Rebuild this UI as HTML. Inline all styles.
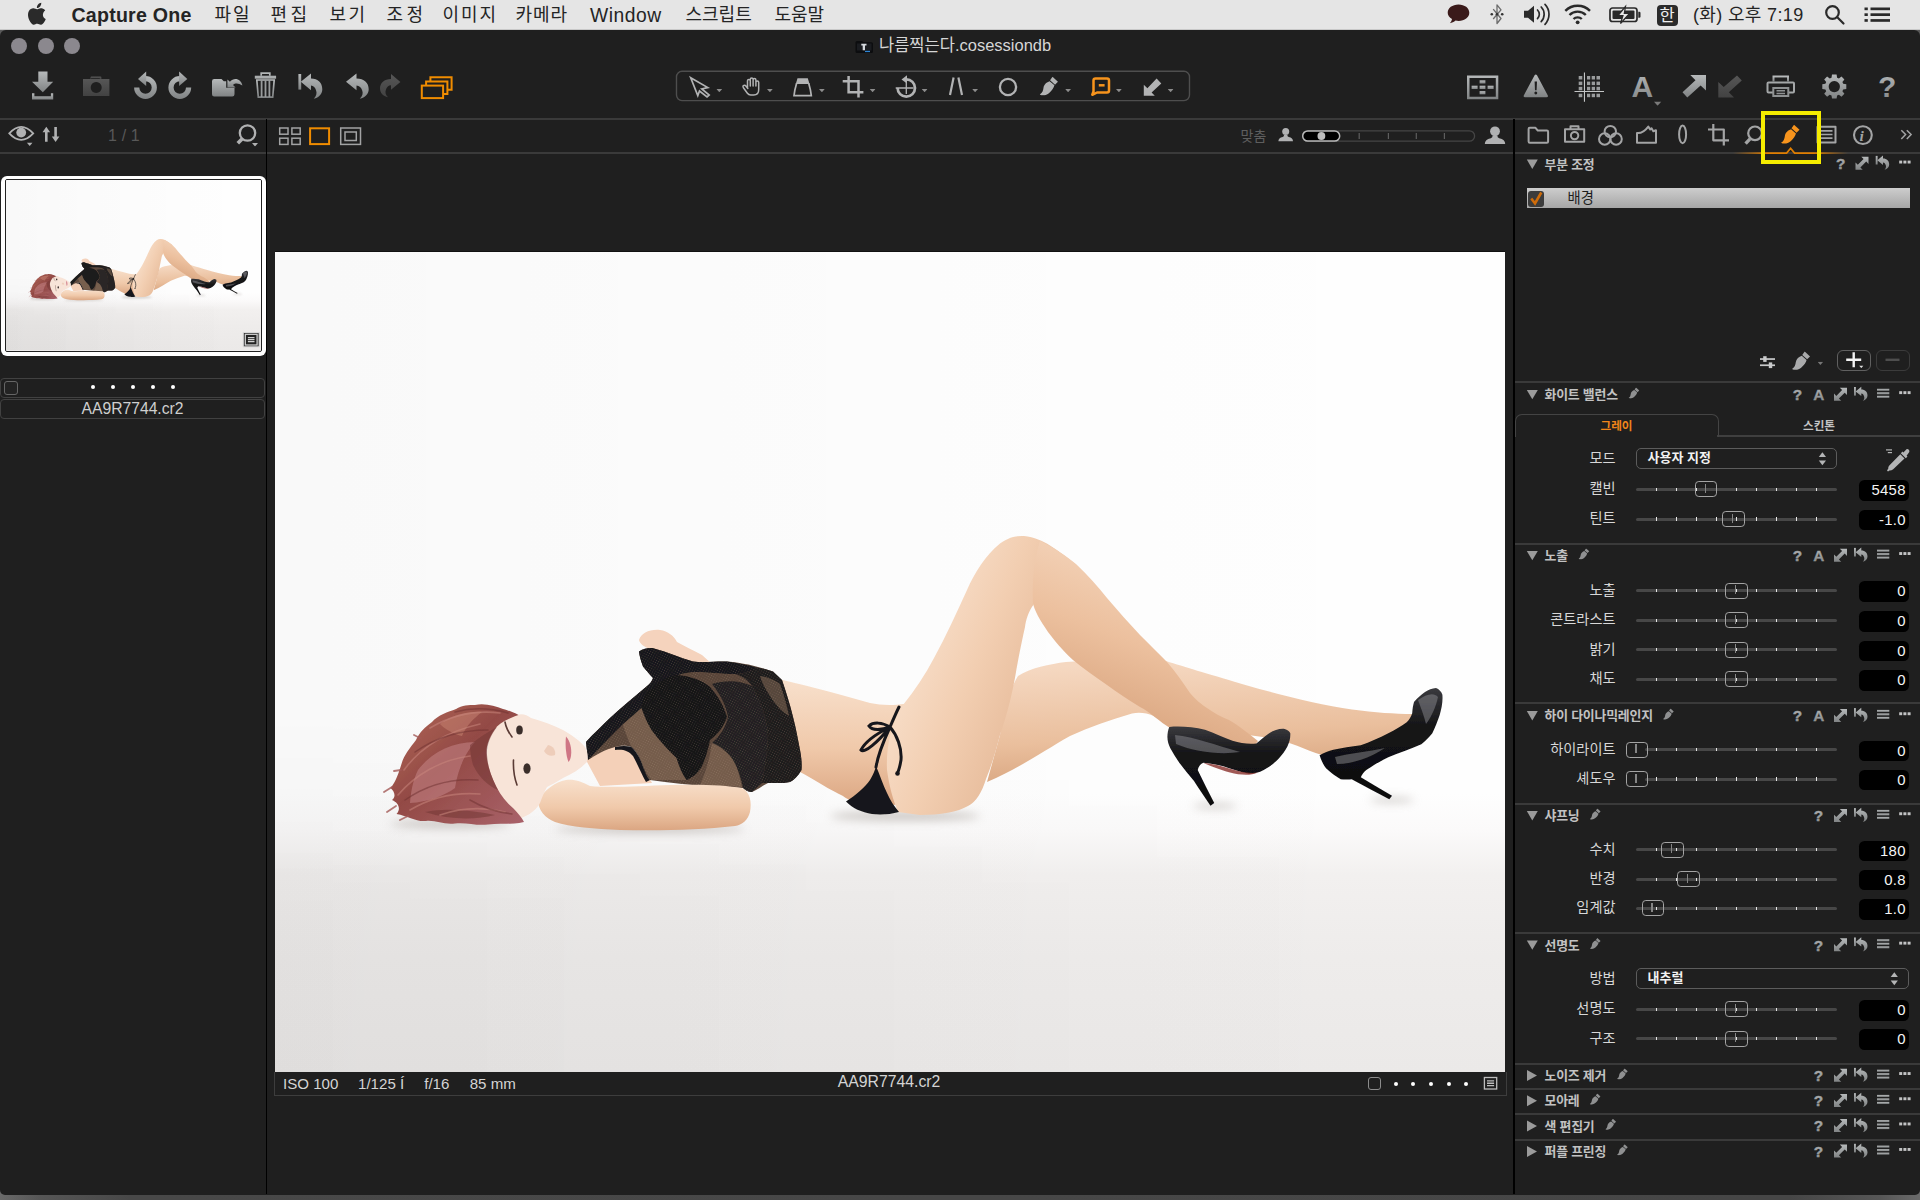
<!DOCTYPE html>
<html lang="ko">
<head>
<meta charset="utf-8">
<title>Capture One</title>
<style>
*{box-sizing:border-box;margin:0;padding:0}
html,body{width:1920px;height:1200px;overflow:hidden}
body{position:relative;background:#5a5a5a;font-family:"Liberation Sans","Noto Sans CJK KR",sans-serif;color:#c8c8c8;font-size:14px}
body>div,body>svg{position:absolute}
svg{overflow:visible}
#menubar{left:0;top:0;width:1920px;height:30px;background:#e5e5e5;border-bottom:1px solid #c8c8c8}
#menubar span{position:absolute;top:1px;height:29px;line-height:29px;color:#242424;white-space:nowrap}
#menubar span.b{font-weight:bold;font-size:19.6px}
#menubar span.k{font-size:18px}
#menubar span.l{font-size:19.3px}
#menubar span.han{left:1656.5px;top:4.5px;width:21px;height:21px;line-height:20px;background:#2b2b2b;color:#f0f0f0;border-radius:4px;font-size:16.5px;text-align:center}
#win{left:0;top:30px;width:1920px;height:1164.5px;background:#1f1f1f;border-radius:6px 6px 5px 5px}
#desk{left:0;top:1186px;width:1920px;height:14px;background:linear-gradient(90deg,#6a6a6a 0,#565656 40px,#484848 130px,#464646 1790px,#565656 1880px,#6a6a6a 1920px)}
.hl{height:2px;background:#3a3a3a}
.vl{width:2px;background:#000}
.tl{top:37.5px;width:16px;height:16px;border-radius:50%;background:#8b888e}
#title{top:33px;left:879px;font-size:16.5px;color:#d6d6d6;line-height:24px;white-space:nowrap}
.t{white-space:nowrap;line-height:21px}
#thumb{left:1px;top:175.5px;width:264.5px;height:180px;background:#fff;border-radius:6px}
#thumbin{position:absolute;left:3.5px;top:3.5px;width:257px;height:172.5px;border:1.3px solid #222;border-radius:2px;overflow:hidden;background:#f3f3f3}
.rbar{border:1.3px solid #414141;border-radius:4px}
.cb{width:14px;height:14px;border:1px solid #666;border-radius:3px;background:#232323}
.dot{width:4px;height:4px;border-radius:50%;background:#fff}
#photobox{left:275px;top:252px;width:1230px;height:820px;background:#f6f6f6;overflow:hidden;box-shadow:0 -1px 0 #111}
#infobar{left:273.8px;top:1072px;width:1233.4px;height:24.2px;border:1.8px solid #3d3d3d;border-top:none}
.inf{top:1073.5px;font-size:15.1px;color:#d4d4d4;line-height:20px}
.sh{font-size:12.9px;font-weight:bold;color:#c2c2c2;letter-spacing:-.2px}
.lb{left:1515px;width:100.5px;text-align:right;font-size:14.2px;color:#d8d8d8}
#layer{left:1526.5px;top:187.5px;width:383px;height:20.5px;background:linear-gradient(#cdcdcd,#a6a6a6)}
#lcb{left:1528px;top:191px;width:16px;height:15.5px;border-radius:3px;background:#3c3c3c}
.btn{border:1.5px solid #555;border-radius:6px}
#tabline{left:1717px;top:435px;width:203px;height:2px;background:#3f3f3f}
#tab1{left:1515px;top:414px;width:204px;height:23px;border:1.5px solid #444;border-bottom:none;border-radius:7px 7px 0 0}
.sel{height:20.6px;border:1.3px solid #5c5c5c;border-radius:5px}
.sel span{position:absolute;left:10.5px;top:-1px;font-size:13px;font-weight:bold;color:#f2f2f2;line-height:20px;white-space:nowrap}
.trk{height:3px;background:#474747;border-radius:1.5px}
.tk{width:1.6px;height:3.2px;background:#e8e8e8}
.th{width:22.4px;height:16.2px;border:1.8px solid #a4a4a4;border-radius:3.8px}
.th:after{content:"";position:absolute;left:8.8px;top:1.8px;width:1.3px;height:9px;background:#858585}
.val{left:1858.7px;width:50.4px;height:20.8px;background:#000;border-radius:5.5px;color:#f4f4f4;font-size:14.9px;letter-spacing:.25px;line-height:20.4px;text-align:right;padding-right:3.4px;white-space:nowrap}
#ybox{left:1760.5px;top:110.7px;width:60.4px;height:53.4px;border:4.7px solid #f5ec00;z-index:9}

</style>
</head>
<body>
<div id="desk"></div>
<div id="win"></div>
<div id="menubar">
<span class="b" style="left:71.5px;letter-spacing:0.22px">Capture One</span>
<span class="k" style="left:214.5px;letter-spacing:2px">파일</span>
<span class="k" style="left:270.5px;letter-spacing:3.5px">편집</span>
<span class="k" style="left:329.5px;letter-spacing:2.5px">보기</span>
<span class="k" style="left:386.5px;letter-spacing:3.5px">조정</span>
<span class="k" style="left:442.5px;letter-spacing:2px">이미지</span>
<span class="k" style="left:515.5px;letter-spacing:1px">카메라</span>
<span class="l" style="left:590px;letter-spacing:0.5px">Window</span>
<span class="k" style="left:685.5px;letter-spacing:0px">스크립트</span>
<span class="k" style="left:774.5px;letter-spacing:0px">도움말</span>
<span class="k" style="left:1693px;letter-spacing:.35px">(화) 오후 7:19</span>
<span class="han">한</span>
</div>
<div class="tl" style="left:11px"></div>
<div class="tl" style="left:37.5px"></div>
<div class="tl" style="left:64px"></div>
<div id="title">나름찍는다.cosessiondb</div>
<div class="hl" style="left:0;top:117.5px;width:1920px"></div>
<div class="hl" style="left:0;top:151.5px;width:1920px"></div>
<div class="vl" style="left:265.6px;top:119px;height:1075px;width:1.6px"></div>
<div class="vl" style="left:1513px;top:119px;height:1075px"></div>
<div class="t" style="left:108px;top:125px;font-size:16px;color:#585858;letter-spacing:.15px">1 / 1</div>
<div class="t" style="left:1240.5px;top:125.5px;font-size:14px;color:#5e5e5e">맞춤</div>
<div id="thumb"><div id="thumbin"><svg id="photo_t" width="100%" height="100%" viewBox="275 252 1230 820" preserveAspectRatio="none" style="position:absolute;left:0;top:0">
<defs>
<linearGradient id="tbg" x1="0" y1="0" x2="0" y2="1"><stop offset="0" stop-color="#fefefe"/><stop offset=".66" stop-color="#fefefe"/><stop offset=".705" stop-color="#fbfafa"/><stop offset=".76" stop-color="#f2f0ef"/><stop offset=".86" stop-color="#eeeceb"/><stop offset="1" stop-color="#ebe9e8"/></linearGradient>
<linearGradient id="tvg" x1="0" y1="0" x2="1" y2="0"><stop offset="0" stop-color="#000" stop-opacity=".052"/><stop offset=".35" stop-color="#000" stop-opacity=".03"/><stop offset=".75" stop-color="#000" stop-opacity=".008"/><stop offset="1" stop-color="#000" stop-opacity="0"/></linearGradient>
<linearGradient id="ta" x1="0" y1="0" x2="0" y2="1"><stop offset="0" stop-color="#f8e0cc"/><stop offset=".55" stop-color="#f0c9aa"/><stop offset="1" stop-color="#dba682"/></linearGradient>
<linearGradient id="tb" x1="0" y1=".2" x2="1" y2=".8"><stop offset="0" stop-color="#fbe8d8"/><stop offset=".45" stop-color="#f2ceb1"/><stop offset="1" stop-color="#dcaa86"/></linearGradient>
<linearGradient id="tc" x1=".7" y1="0" x2=".3" y2="1"><stop offset="0" stop-color="#f7dcc6"/><stop offset=".5" stop-color="#ecc09e"/><stop offset="1" stop-color="#d39c75"/></linearGradient>
<linearGradient id="td" x1=".4" y1="0" x2=".6" y2="1"><stop offset="0" stop-color="#f5d8c1"/><stop offset=".6" stop-color="#eabf9d"/><stop offset="1" stop-color="#d6a27c"/></linearGradient>
<linearGradient id="th" x1="0" y1="0" x2="1" y2="1"><stop offset="0" stop-color="#b46a5a"/><stop offset=".45" stop-color="#934a45"/><stop offset="1" stop-color="#a9626a"/></linearGradient>
<linearGradient id="ts" x1="0" y1="0" x2="0" y2="1"><stop offset="0" stop-color="#3a3a3e"/><stop offset=".35" stop-color="#141416"/><stop offset="1" stop-color="#0c0c0e"/></linearGradient>
<linearGradient id="tmg" x1="0" y1="0" x2="0" y2="1"><stop offset=".55" stop-color="#000"/><stop offset=".8" stop-color="#fff"/></linearGradient><mask id="tmk" maskUnits="userSpaceOnUse" x="275" y="252" width="1230" height="820"><rect x="275" y="252" width="1230" height="820" fill="url(#tmg)"/></mask><pattern id="tmesh" width="2.400" height="2.400" patternUnits="userSpaceOnUse" patternTransform="rotate(30)"><rect width="2.400" height="2.400" fill="#000" fill-opacity=".0"/><circle cx="1.200" cy="1.200" r=".5" fill="#c9a78e" fill-opacity=".3"/></pattern><filter id="tbl" x="-20%" y="-100%" width="140%" height="300%"><feGaussianBlur stdDeviation="5"/></filter>
<filter id="tb2" x="-10%" y="-10%" width="120%" height="120%"><feGaussianBlur stdDeviation=".7"/></filter>
</defs>
<rect x="275" y="252" width="1230" height="820" fill="url(#tbg)"/>
<rect x="275" y="252" width="1230" height="820" fill="url(#tvg)" opacity=".4"/><rect x="275" y="252" width="1230" height="820" fill="url(#tvg)" opacity=".55" mask="url(#tmk)"/>
<!-- floor shadows -->
<g filter="url(#tbl)" fill="#a9a29c" opacity=".6"><ellipse cx="650" cy="829" rx="95" ry="4"/><ellipse cx="905" cy="816" rx="75" ry="4.500"/><ellipse cx="450" cy="824" rx="60" ry="4"/><ellipse cx="1215" cy="806" rx="22" ry="2.500"/><ellipse cx="1392" cy="800" rx="22" ry="2.500"/></g>
<g filter="url(#tb2)">
<!-- back leg: second thigh + calf -->
<path fill="url(#td)" d="M1000 735 C1005 705 1012 685 1018 676 C1030 668 1050 664 1066 662 C1095 660 1130 662 1166 661 C1185 667 1205 673 1242 684 C1280 695 1320 705 1352 709.500 C1375 712.500 1395 714 1412 714 L1420 742 C1400 748 1370 752 1345 752 L1322 755 C1305 750 1290 741 1270 738 L1168 724 C1155 716 1146 711 1132 713.500 C1110 720 1090 727 1070 736 C1045 750 1020 768 987 782 Z"/>
<!-- torso -->
<path fill="url(#ta)" d="M779 679 C795 683 805 685.500 815 688 C835 693 852 698 870 703 C885 706 900 706 925 700 L930 800 C905 806 880 806 862 803 C852 801 846 799 843 796 C830 790 815 780 800 772 Z"/>
<!-- front thigh -->
<path fill="url(#tb)" d="M903 705 C915 690 925 675 934 658 C946 636 957 612 967 590 C975 572 985 556 1000 543.500 C1008 537.500 1016 535.500 1024 536 C1034 537 1043 541 1050 545.500 C1060 552 1068 558 1075 564 L1082 585 C1065 590 1045 596 1034 604 C1028 612 1026 620 1025 627 C1021 645 1018 660 1016 672 C1013 690 1008 712 1000 735 C996 750 992 765 986 779 C982 792 976 802 968 806 C958 812 940 815 920 815 L898 812 C893 800 889 785 887 770 C886 750 890 725 903 705 Z"/>
<!-- front shin + foot -->
<path fill="url(#tc)" d="M1040 541 C1055 548 1066 556 1076 564 C1088 575 1098 587 1107 598 C1118 611 1129 623 1140 635 C1150 645 1159 654 1167 662 C1176 672 1183 683 1190 693 C1196 700 1201 704 1207 708 C1214 713 1221 717 1229 720 C1238 725 1248 733 1258 741 L1250 752 C1225 750 1195 742 1170 728 C1160 722 1150 712 1140 707 C1128 700 1117 692 1107 685 C1095 677 1083 668 1073 660 C1062 650 1054 640 1048 632 C1040 620 1034 610 1033 603 C1032 580 1034 560 1040 541 Z"/>
<!-- bikini -->
<path fill="#17171a" d="M846 801.500 C856 795 865 787 870 780 C873 775 875 770 876 766 C880 775 883 785 887 793 C890 800 894 806 899 812 C890 814.500 880 815 872 814 C862 812.500 852 808 846 801.500 Z"/>
<g fill="none" stroke="#17171a" stroke-width="3" stroke-linecap="round"><path d="M899 707 C896 713 893 720 890 727 M890 727 C882 722 873 722 869 726 C872 731 882 730 890 727 M890 727 C878 733 865 742 861 750 C864 754 878 742 890 727 M890 727 C897 735 902 748 901 760 C900 766 899 770 897.500 773 M890 727 C884 740 878 755 876 767"/></g><circle cx="897.500" cy="773.500" r="2.300" fill="#17171a"/>
<!-- raised hand -->
<path fill="#f5d3bd" d="M639 640 C641 633 650 629 660 630 C668 631 674 636 677 642 C684 646 693 650 702 655 L712 664 L690 663 C675 659 660 652 650 649 C644 647 640 644 639 640 Z"/>
<!-- chest skin -->
<path fill="#f4d0b8" d="M586 760 C596 750 608 745 620 746 C630 747 638 752 643 766 L652 783 L600 786 Z"/>
<!-- mesh top -->
<path fill="#594539" d="M639 651.500 C645 648 650 647.500 654 648.500 C668 652 680 658 693 661.500 C705 663 716 661 727 661.500 C745 663 760 667 773 671.500 L782 680 C786 692 790 704 793 717 C796 728 798 740 800 750 C801.500 758 802 764 801.500 770 C798 776 794 780 790 782 C783 783.500 776 783 768 783 C762 786 757 790 752 792 C748 792 745 790 743 788 C732 787.500 720 787 710 786.500 C690 785 670 783 650 780 C646 776 644 771 643 766.500 C640 758 636 751 631.500 747 C626 745 620 745.500 615 747 C604 750 596 755 588 760 L586 742 C594 733 602 726 610 718 C622 707 635 696 646.500 686.500 C650 684 652 681 653 678 C649 674 646 670 643 666.500 C641 661 639.500 656 639 651.500 Z"/>
<path fill="#7b6250" opacity=".8" d="M622 722 C630 715 638 708 644 703 C645 712 648 722 652 730 C660 741 669 750 677 758 C680 766 683 774 687 780 L652 780 C647 775 645 770 643 766 C640 758 636 750 631 746 C628 740 625 731 622 722 Z M712 742 C722 745 730 752 735 762 C738 770 740 778 742 787 L700 785 C706 772 710 757 712 742 Z"/>
<path fill="#17171a" d="M639 651.500 C645 648 650 647.500 654 648.500 C668 652 680 658 693 661.500 C705 663 716 661 727 661.500 C738 663 748 665 757 667.500 C750 672 742 674 735 674 C722 674 708 672 697 672 C688 672 680 674 676 676 C668 680 660 686 654 692 C650 696 647 700 645 703 L641.500 708 C637 712 630 718 622 725 L612 735 L588 760 L586 742 C594 733 602 726 610 718 C622 707 635 696 646.500 686.500 C650 684 652 681 653 678 C649 674 646 670 643 666.500 C641 661 639.500 656 639 651.500 Z"/>
<path fill="#141416" d="M647 693 C655 684 666 677 677 675 C690 676 702 680 710 687 C718 696 724 706 727 717 C724 726 718 734 710 740 C708 750 705 760 701.500 767 C697 774 692 778 686.500 780 C682 774 679 766 676.500 758 C668 750 659 740 651.500 730 C647 723 644 715 641.500 708 C642 702 644 697 647 693 Z"/>
<path fill="#1a1a1c" opacity=".88" d="M712 684 C725 680 740 680 752 686 C760 700 766 716 768 733 C768 750 765 767 762 783 L752 792 C748 792 745 790 743 788 C741 778 738 768 733 760 C728 752 720 746 712 743 C720 736 726 727 728 717 C726 705 720 694 712 684 Z"/>
<path fill="#17171a" d="M757 667.500 C763 668.500 768 670 773 671.500 L782 680 C786 692 790 704 793 717 C796 728 798 740 800 750 C801.500 758 802 764 801.500 770 C798 776 794 780 790 782 C783 783.500 776 783 768 783 L762 783 C765 767 768 750 768 733 C766 716 760 700 752 686 C748 680 742 676 735 674 C742 674 750 672 757 667.500 Z" opacity=".9"/>
<path fill="#6a5446" opacity=".75" d="M760 676 C768 677 775 680 780 684 C784 695 787 706 789 716 C782 712 775 704 770 696 C766 690 762 683 760 676 Z"/>
<path fill="#17171a" d="M615 747 C621 745.500 627 745.500 631.500 747 C637 752 641 760 643 766.500 C645 772 647 777 650 780 L646 782 C642 775 638 765 633 756 C628 750 622 749 615 750 Z"/>
<path fill="url(#tmesh)" d="M639 651.500 C645 648 650 647.500 654 648.500 C668 652 680 658 693 661.500 C705 663 716 661 727 661.500 C745 663 760 667 773 671.500 L782 680 C786 692 790 704 793 717 C796 728 798 740 800 750 C801.500 758 802 764 801.500 770 C798 776 794 780 790 782 C783 783.500 776 783 768 783 C762 786 757 790 752 792 C748 792 745 790 743 788 C732 787.500 720 787 710 786.500 C690 785 670 783 650 780 C646 776 644 771 643 766.500 C640 758 636 751 631.500 747 C626 745 620 745.500 615 747 C604 750 596 755 588 760 L586 742 C594 733 602 726 610 718 C622 707 635 696 646.500 686.500 C650 684 652 681 653 678 C649 674 646 670 643 666.500 C641 661 639.500 656 639 651.500 Z"/>
<!-- arm on floor + hand -->
<path fill="url(#ta)" d="M538 800 C545 790 555 782 566 780 C575 779 582 782 590 786 C610 788 640 786 670 785 C700 784 725 785 742 788 C750 792 752 802 750 812 C748 820 742 825 735 826 C700 830 660 831 620 830 C595 829 570 827 555 822 C545 818 538 810 538 800 Z"/>
<!-- face -->
<path fill="#f8e4d8" d="M517 715 C522 713 527 715 531 718 C542 721 553 725 563 730 C572 735 580 741 585 747 C588 752 588 757 587 762 C580 769 572 774 563 778 C557 782 551 785 547 787 C544 792 542 798 540 803 C535 812 525 818 514 820 L500 800 C492 780 486 765 487 752 C488 740 492 730 497 726 C503 721 510 717 517 715 Z"/>
<path fill="#e9c3ae" d="M548 745 C553 746 556 750 555 755 C551 757 546 755 544 751 Z" opacity=".7"/>
<g fill="#3a2e2c"><ellipse cx="519.500" cy="730" rx="3.300" ry="4.600"/><ellipse cx="527" cy="768.500" rx="3.600" ry="5.200"/></g>
<g fill="none" stroke="#5a3a34" stroke-width="1.600" stroke-linecap="round"><path d="M505 722 C506 728 509 733 512 737 M513.500 760 C513 770 514.500 778 517 785"/></g>
<path fill="#cf7685" d="M566 736.500 C570 741 572 748 571 756 C570.500 759 569.500 761 568.500 762 C566 756 565 745 566 736.500 Z"/>
<!-- hair -->
<path fill="url(#th)" d="M475 705 C485 703 495 706 503 709 C510 711 515 713 518.500 715 C510 718 503 721 497 726.500 C490 735 486 745 486.500 753.500 C487 765 491 776 496.500 787 C501 796 507 803 513.500 808.500 C518 813 522 818 524 822 C512 825 500 823 488 824.500 C476 826 466 822 455 823.500 C444 825 436 820 426 821 C416 822 408 816 396.500 814 C401 809 399 803 392 800 C396 797 395 792 390.500 788 C396 782 399 772 401.700 763.300 C404 755 410 748 416 740 C419 733 425 727 432 722 C438 715 448 712 456 709 C462 705 469 705 475 705 Z"/>
<path fill="#c98a8e" opacity=".5" d="M418 770 C432 752 452 742 475 742 C466 752 458 768 455 788 C444 796 428 802 410 803 C411 791 413 780 418 770 Z"/>
<path fill="#c4826f" opacity=".55" d="M440 724 C452 715 468 711 482 712 C474 718 466 726 462 736 C454 734 446 730 440 724 Z"/>
<path fill="#733634" opacity=".55" d="M470 745 C478 738 488 732 497 727 C490 736 486.500 746 487 755 C488 768 492 779 498 790 C488 786 478 776 473 765 C471 758 470 751 470 745 Z M425 812 C445 808 470 810 495 815 C475 820 450 820 425 812 Z"/>
<g fill="none" stroke-linecap="round"><path d="M404 770 C420 748 445 732 480 724 M398 795 C415 775 440 760 470 756 M410 810 C430 798 455 792 480 794 M430 728 C450 716 475 710 500 713 M440 815 C460 808 480 806 505 812" stroke="#c9857c" stroke-width="1.600" opacity=".55"/><path d="M415 752 C435 738 460 730 488 730 M405 800 C425 786 450 778 478 780 M455 712 C470 708 490 708 508 713 M470 800 C480 806 495 812 512 814" stroke="#6e302f" stroke-width="1.500" opacity=".5"/><path d="M392 787 L384 792 M396 806 L387 812 M401 770 L394 771 M420 738 L414 735 M408 816 L400 820" stroke="#a45a58" stroke-width="1.800" opacity=".8"/></g>
<!-- shoes -->
<path fill="url(#ts)" d="M1169.300 727 C1180 726 1193 727 1205 729.700 C1215 733 1224 738 1232.500 740.700 C1241 743.500 1249 744 1256.300 743.400 C1261 740 1265 736 1269.200 733.300 C1274 730 1279 728.500 1283.800 728.750 C1287 729.500 1289.500 731 1290.300 733.300 C1290.500 738 1289.500 742 1287.500 746.200 C1285 751 1282 755 1278.300 759 C1274 763.500 1269 767 1263.700 770 C1259 772.500 1254 773.700 1249 773.700 C1240 772 1231 769 1223.300 766.300 C1216 764.500 1209 763 1203.200 762.700 C1200 764 1198.500 767 1197.700 770 C1203 781 1208.500 792 1214.200 803 L1210.500 805.750 C1204.500 797 1199 789 1194 781 C1189 775 1184 769 1179.300 762.700 C1176 758 1173 753 1170.200 748 C1168.500 744.500 1167.500 741 1167.400 737 C1167.500 733 1168 730 1169.300 727 Z"/>
<path fill="url(#ts)" d="M1319.600 755.300 C1324 753 1328.500 751 1333.300 749.800 C1342 748 1351 746.500 1360.800 745.250 C1370 742 1379 738 1388.300 733.300 C1395 730 1401 726.500 1406.700 722.300 C1409.500 719.500 1411 716.500 1412.200 713.200 C1412.500 709 1413 705.500 1414 702 C1417 698 1421 695 1425 692 C1428.500 689.500 1432 688.500 1436 687.900 C1439 689 1441.500 691.500 1442.400 694.800 C1443 702 1441.500 708.500 1439.700 715 C1437.500 721.500 1435 727.500 1432.300 733.300 C1429 737.500 1425.500 741 1421.300 744.300 C1410 749 1399 753 1388.300 757.200 C1380.500 761 1373 765.500 1366.300 770 C1364 772 1362 774.500 1360.800 777.300 C1371 783.500 1381.500 789.500 1392 795.700 L1389.300 799.300 C1376.500 792.500 1364 786 1351.700 779.200 C1348 779.500 1344.500 779.500 1340.700 779.200 C1335.500 776 1330.500 772.500 1326 768.200 C1323 764 1321 760 1319.600 755.300 Z"/>
<path fill="#8a8a90" opacity=".5" d="M1175 735 C1195 737 1215 745 1240 752 C1220 755 1195 752 1176 744 Z M1418 700 C1426 694 1434 692 1438 697 C1436 706 1432 716 1426 724 C1424 716 1421 708 1418 700 Z M1335 757 C1350 753 1368 752 1385 748 C1370 758 1352 764 1337 764 Z"/>
<path fill="#8a2f2c" opacity=".8" d="M1203.200 762.700 C1212 763.500 1222 766 1231 769 C1240 772 1249 773.700 1258 772.500 C1250 776 1240 775 1230 772.500 C1220 769.500 1210 766 1203.200 762.700 Z"/>
</g>
</svg>
</div></div>
<div class="rbar" style="left:0;top:377.5px;width:265px;height:20.5px"></div>
<div class="rbar" style="left:0;top:398.5px;width:265px;height:20px"></div>
<div class="cb" style="left:4px;top:381px"></div>
<div class="dot" style="left:90.5px;top:385px"></div>
<div class="dot" style="left:110.7px;top:385px"></div>
<div class="dot" style="left:130.8px;top:385px"></div>
<div class="dot" style="left:150.8px;top:385px"></div>
<div class="dot" style="left:170.8px;top:385px"></div>
<div class="t" style="left:0;top:399px;width:265px;text-align:center;font-size:15.7px;color:#cfcfcf;line-height:19px">AA9R7744.cr2</div>
<div id="photobox"><svg id="photo" width="100%" height="100%" viewBox="275 252 1230 820" preserveAspectRatio="none" style="position:absolute;left:0;top:0">
<defs>
<linearGradient id="mbg" x1="0" y1="0" x2="0" y2="1"><stop offset="0" stop-color="#fefefe"/><stop offset=".66" stop-color="#fefefe"/><stop offset=".705" stop-color="#fbfafa"/><stop offset=".76" stop-color="#f2f0ef"/><stop offset=".86" stop-color="#eeeceb"/><stop offset="1" stop-color="#ebe9e8"/></linearGradient>
<linearGradient id="mvg" x1="0" y1="0" x2="1" y2="0"><stop offset="0" stop-color="#000" stop-opacity=".052"/><stop offset=".35" stop-color="#000" stop-opacity=".03"/><stop offset=".75" stop-color="#000" stop-opacity=".008"/><stop offset="1" stop-color="#000" stop-opacity="0"/></linearGradient>
<linearGradient id="ma" x1="0" y1="0" x2="0" y2="1"><stop offset="0" stop-color="#f8e0cc"/><stop offset=".55" stop-color="#f0c9aa"/><stop offset="1" stop-color="#dba682"/></linearGradient>
<linearGradient id="mb" x1="0" y1=".2" x2="1" y2=".8"><stop offset="0" stop-color="#fbe8d8"/><stop offset=".45" stop-color="#f2ceb1"/><stop offset="1" stop-color="#dcaa86"/></linearGradient>
<linearGradient id="mc" x1=".7" y1="0" x2=".3" y2="1"><stop offset="0" stop-color="#f7dcc6"/><stop offset=".5" stop-color="#ecc09e"/><stop offset="1" stop-color="#d39c75"/></linearGradient>
<linearGradient id="md" x1=".4" y1="0" x2=".6" y2="1"><stop offset="0" stop-color="#f5d8c1"/><stop offset=".6" stop-color="#eabf9d"/><stop offset="1" stop-color="#d6a27c"/></linearGradient>
<linearGradient id="mh" x1="0" y1="0" x2="1" y2="1"><stop offset="0" stop-color="#b46a5a"/><stop offset=".45" stop-color="#934a45"/><stop offset="1" stop-color="#a9626a"/></linearGradient>
<linearGradient id="ms" x1="0" y1="0" x2="0" y2="1"><stop offset="0" stop-color="#3a3a3e"/><stop offset=".35" stop-color="#141416"/><stop offset="1" stop-color="#0c0c0e"/></linearGradient>
<linearGradient id="mmg" x1="0" y1="0" x2="0" y2="1"><stop offset=".55" stop-color="#000"/><stop offset=".8" stop-color="#fff"/></linearGradient><mask id="mmk" maskUnits="userSpaceOnUse" x="275" y="252" width="1230" height="820"><rect x="275" y="252" width="1230" height="820" fill="url(#mmg)"/></mask><pattern id="mmesh" width="2.400" height="2.400" patternUnits="userSpaceOnUse" patternTransform="rotate(30)"><rect width="2.400" height="2.400" fill="#000" fill-opacity=".0"/><circle cx="1.200" cy="1.200" r=".5" fill="#c9a78e" fill-opacity=".3"/></pattern><filter id="mbl" x="-20%" y="-100%" width="140%" height="300%"><feGaussianBlur stdDeviation="5"/></filter>
<filter id="mb2" x="-10%" y="-10%" width="120%" height="120%"><feGaussianBlur stdDeviation=".7"/></filter>
</defs>
<rect x="275" y="252" width="1230" height="820" fill="url(#mbg)"/>
<rect x="275" y="252" width="1230" height="820" fill="url(#mvg)" opacity=".4"/><rect x="275" y="252" width="1230" height="820" fill="url(#mvg)" opacity=".55" mask="url(#mmk)"/>
<!-- floor shadows -->
<g filter="url(#mbl)" fill="#a9a29c" opacity=".6"><ellipse cx="650" cy="829" rx="95" ry="4"/><ellipse cx="905" cy="816" rx="75" ry="4.500"/><ellipse cx="450" cy="824" rx="60" ry="4"/><ellipse cx="1215" cy="806" rx="22" ry="2.500"/><ellipse cx="1392" cy="800" rx="22" ry="2.500"/></g>
<g filter="url(#mb2)">
<!-- back leg: second thigh + calf -->
<path fill="url(#md)" d="M1000 735 C1005 705 1012 685 1018 676 C1030 668 1050 664 1066 662 C1095 660 1130 662 1166 661 C1185 667 1205 673 1242 684 C1280 695 1320 705 1352 709.500 C1375 712.500 1395 714 1412 714 L1420 742 C1400 748 1370 752 1345 752 L1322 755 C1305 750 1290 741 1270 738 L1168 724 C1155 716 1146 711 1132 713.500 C1110 720 1090 727 1070 736 C1045 750 1020 768 987 782 Z"/>
<!-- torso -->
<path fill="url(#ma)" d="M779 679 C795 683 805 685.500 815 688 C835 693 852 698 870 703 C885 706 900 706 925 700 L930 800 C905 806 880 806 862 803 C852 801 846 799 843 796 C830 790 815 780 800 772 Z"/>
<!-- front thigh -->
<path fill="url(#mb)" d="M903 705 C915 690 925 675 934 658 C946 636 957 612 967 590 C975 572 985 556 1000 543.500 C1008 537.500 1016 535.500 1024 536 C1034 537 1043 541 1050 545.500 C1060 552 1068 558 1075 564 L1082 585 C1065 590 1045 596 1034 604 C1028 612 1026 620 1025 627 C1021 645 1018 660 1016 672 C1013 690 1008 712 1000 735 C996 750 992 765 986 779 C982 792 976 802 968 806 C958 812 940 815 920 815 L898 812 C893 800 889 785 887 770 C886 750 890 725 903 705 Z"/>
<!-- front shin + foot -->
<path fill="url(#mc)" d="M1040 541 C1055 548 1066 556 1076 564 C1088 575 1098 587 1107 598 C1118 611 1129 623 1140 635 C1150 645 1159 654 1167 662 C1176 672 1183 683 1190 693 C1196 700 1201 704 1207 708 C1214 713 1221 717 1229 720 C1238 725 1248 733 1258 741 L1250 752 C1225 750 1195 742 1170 728 C1160 722 1150 712 1140 707 C1128 700 1117 692 1107 685 C1095 677 1083 668 1073 660 C1062 650 1054 640 1048 632 C1040 620 1034 610 1033 603 C1032 580 1034 560 1040 541 Z"/>
<!-- bikini -->
<path fill="#17171a" d="M846 801.500 C856 795 865 787 870 780 C873 775 875 770 876 766 C880 775 883 785 887 793 C890 800 894 806 899 812 C890 814.500 880 815 872 814 C862 812.500 852 808 846 801.500 Z"/>
<g fill="none" stroke="#17171a" stroke-width="3" stroke-linecap="round"><path d="M899 707 C896 713 893 720 890 727 M890 727 C882 722 873 722 869 726 C872 731 882 730 890 727 M890 727 C878 733 865 742 861 750 C864 754 878 742 890 727 M890 727 C897 735 902 748 901 760 C900 766 899 770 897.500 773 M890 727 C884 740 878 755 876 767"/></g><circle cx="897.500" cy="773.500" r="2.300" fill="#17171a"/>
<!-- raised hand -->
<path fill="#f5d3bd" d="M639 640 C641 633 650 629 660 630 C668 631 674 636 677 642 C684 646 693 650 702 655 L712 664 L690 663 C675 659 660 652 650 649 C644 647 640 644 639 640 Z"/>
<!-- chest skin -->
<path fill="#f4d0b8" d="M586 760 C596 750 608 745 620 746 C630 747 638 752 643 766 L652 783 L600 786 Z"/>
<!-- mesh top -->
<path fill="#594539" d="M639 651.500 C645 648 650 647.500 654 648.500 C668 652 680 658 693 661.500 C705 663 716 661 727 661.500 C745 663 760 667 773 671.500 L782 680 C786 692 790 704 793 717 C796 728 798 740 800 750 C801.500 758 802 764 801.500 770 C798 776 794 780 790 782 C783 783.500 776 783 768 783 C762 786 757 790 752 792 C748 792 745 790 743 788 C732 787.500 720 787 710 786.500 C690 785 670 783 650 780 C646 776 644 771 643 766.500 C640 758 636 751 631.500 747 C626 745 620 745.500 615 747 C604 750 596 755 588 760 L586 742 C594 733 602 726 610 718 C622 707 635 696 646.500 686.500 C650 684 652 681 653 678 C649 674 646 670 643 666.500 C641 661 639.500 656 639 651.500 Z"/>
<path fill="#7b6250" opacity=".8" d="M622 722 C630 715 638 708 644 703 C645 712 648 722 652 730 C660 741 669 750 677 758 C680 766 683 774 687 780 L652 780 C647 775 645 770 643 766 C640 758 636 750 631 746 C628 740 625 731 622 722 Z M712 742 C722 745 730 752 735 762 C738 770 740 778 742 787 L700 785 C706 772 710 757 712 742 Z"/>
<path fill="#17171a" d="M639 651.500 C645 648 650 647.500 654 648.500 C668 652 680 658 693 661.500 C705 663 716 661 727 661.500 C738 663 748 665 757 667.500 C750 672 742 674 735 674 C722 674 708 672 697 672 C688 672 680 674 676 676 C668 680 660 686 654 692 C650 696 647 700 645 703 L641.500 708 C637 712 630 718 622 725 L612 735 L588 760 L586 742 C594 733 602 726 610 718 C622 707 635 696 646.500 686.500 C650 684 652 681 653 678 C649 674 646 670 643 666.500 C641 661 639.500 656 639 651.500 Z"/>
<path fill="#141416" d="M647 693 C655 684 666 677 677 675 C690 676 702 680 710 687 C718 696 724 706 727 717 C724 726 718 734 710 740 C708 750 705 760 701.500 767 C697 774 692 778 686.500 780 C682 774 679 766 676.500 758 C668 750 659 740 651.500 730 C647 723 644 715 641.500 708 C642 702 644 697 647 693 Z"/>
<path fill="#1a1a1c" opacity=".88" d="M712 684 C725 680 740 680 752 686 C760 700 766 716 768 733 C768 750 765 767 762 783 L752 792 C748 792 745 790 743 788 C741 778 738 768 733 760 C728 752 720 746 712 743 C720 736 726 727 728 717 C726 705 720 694 712 684 Z"/>
<path fill="#17171a" d="M757 667.500 C763 668.500 768 670 773 671.500 L782 680 C786 692 790 704 793 717 C796 728 798 740 800 750 C801.500 758 802 764 801.500 770 C798 776 794 780 790 782 C783 783.500 776 783 768 783 L762 783 C765 767 768 750 768 733 C766 716 760 700 752 686 C748 680 742 676 735 674 C742 674 750 672 757 667.500 Z" opacity=".9"/>
<path fill="#6a5446" opacity=".75" d="M760 676 C768 677 775 680 780 684 C784 695 787 706 789 716 C782 712 775 704 770 696 C766 690 762 683 760 676 Z"/>
<path fill="#17171a" d="M615 747 C621 745.500 627 745.500 631.500 747 C637 752 641 760 643 766.500 C645 772 647 777 650 780 L646 782 C642 775 638 765 633 756 C628 750 622 749 615 750 Z"/>
<path fill="url(#mmesh)" d="M639 651.500 C645 648 650 647.500 654 648.500 C668 652 680 658 693 661.500 C705 663 716 661 727 661.500 C745 663 760 667 773 671.500 L782 680 C786 692 790 704 793 717 C796 728 798 740 800 750 C801.500 758 802 764 801.500 770 C798 776 794 780 790 782 C783 783.500 776 783 768 783 C762 786 757 790 752 792 C748 792 745 790 743 788 C732 787.500 720 787 710 786.500 C690 785 670 783 650 780 C646 776 644 771 643 766.500 C640 758 636 751 631.500 747 C626 745 620 745.500 615 747 C604 750 596 755 588 760 L586 742 C594 733 602 726 610 718 C622 707 635 696 646.500 686.500 C650 684 652 681 653 678 C649 674 646 670 643 666.500 C641 661 639.500 656 639 651.500 Z"/>
<!-- arm on floor + hand -->
<path fill="url(#ma)" d="M538 800 C545 790 555 782 566 780 C575 779 582 782 590 786 C610 788 640 786 670 785 C700 784 725 785 742 788 C750 792 752 802 750 812 C748 820 742 825 735 826 C700 830 660 831 620 830 C595 829 570 827 555 822 C545 818 538 810 538 800 Z"/>
<!-- face -->
<path fill="#f8e4d8" d="M517 715 C522 713 527 715 531 718 C542 721 553 725 563 730 C572 735 580 741 585 747 C588 752 588 757 587 762 C580 769 572 774 563 778 C557 782 551 785 547 787 C544 792 542 798 540 803 C535 812 525 818 514 820 L500 800 C492 780 486 765 487 752 C488 740 492 730 497 726 C503 721 510 717 517 715 Z"/>
<path fill="#e9c3ae" d="M548 745 C553 746 556 750 555 755 C551 757 546 755 544 751 Z" opacity=".7"/>
<g fill="#3a2e2c"><ellipse cx="519.500" cy="730" rx="3.300" ry="4.600"/><ellipse cx="527" cy="768.500" rx="3.600" ry="5.200"/></g>
<g fill="none" stroke="#5a3a34" stroke-width="1.600" stroke-linecap="round"><path d="M505 722 C506 728 509 733 512 737 M513.500 760 C513 770 514.500 778 517 785"/></g>
<path fill="#cf7685" d="M566 736.500 C570 741 572 748 571 756 C570.500 759 569.500 761 568.500 762 C566 756 565 745 566 736.500 Z"/>
<!-- hair -->
<path fill="url(#mh)" d="M475 705 C485 703 495 706 503 709 C510 711 515 713 518.500 715 C510 718 503 721 497 726.500 C490 735 486 745 486.500 753.500 C487 765 491 776 496.500 787 C501 796 507 803 513.500 808.500 C518 813 522 818 524 822 C512 825 500 823 488 824.500 C476 826 466 822 455 823.500 C444 825 436 820 426 821 C416 822 408 816 396.500 814 C401 809 399 803 392 800 C396 797 395 792 390.500 788 C396 782 399 772 401.700 763.300 C404 755 410 748 416 740 C419 733 425 727 432 722 C438 715 448 712 456 709 C462 705 469 705 475 705 Z"/>
<path fill="#c98a8e" opacity=".5" d="M418 770 C432 752 452 742 475 742 C466 752 458 768 455 788 C444 796 428 802 410 803 C411 791 413 780 418 770 Z"/>
<path fill="#c4826f" opacity=".55" d="M440 724 C452 715 468 711 482 712 C474 718 466 726 462 736 C454 734 446 730 440 724 Z"/>
<path fill="#733634" opacity=".55" d="M470 745 C478 738 488 732 497 727 C490 736 486.500 746 487 755 C488 768 492 779 498 790 C488 786 478 776 473 765 C471 758 470 751 470 745 Z M425 812 C445 808 470 810 495 815 C475 820 450 820 425 812 Z"/>
<g fill="none" stroke-linecap="round"><path d="M404 770 C420 748 445 732 480 724 M398 795 C415 775 440 760 470 756 M410 810 C430 798 455 792 480 794 M430 728 C450 716 475 710 500 713 M440 815 C460 808 480 806 505 812" stroke="#c9857c" stroke-width="1.600" opacity=".55"/><path d="M415 752 C435 738 460 730 488 730 M405 800 C425 786 450 778 478 780 M455 712 C470 708 490 708 508 713 M470 800 C480 806 495 812 512 814" stroke="#6e302f" stroke-width="1.500" opacity=".5"/><path d="M392 787 L384 792 M396 806 L387 812 M401 770 L394 771 M420 738 L414 735 M408 816 L400 820" stroke="#a45a58" stroke-width="1.800" opacity=".8"/></g>
<!-- shoes -->
<path fill="url(#ms)" d="M1169.300 727 C1180 726 1193 727 1205 729.700 C1215 733 1224 738 1232.500 740.700 C1241 743.500 1249 744 1256.300 743.400 C1261 740 1265 736 1269.200 733.300 C1274 730 1279 728.500 1283.800 728.750 C1287 729.500 1289.500 731 1290.300 733.300 C1290.500 738 1289.500 742 1287.500 746.200 C1285 751 1282 755 1278.300 759 C1274 763.500 1269 767 1263.700 770 C1259 772.500 1254 773.700 1249 773.700 C1240 772 1231 769 1223.300 766.300 C1216 764.500 1209 763 1203.200 762.700 C1200 764 1198.500 767 1197.700 770 C1203 781 1208.500 792 1214.200 803 L1210.500 805.750 C1204.500 797 1199 789 1194 781 C1189 775 1184 769 1179.300 762.700 C1176 758 1173 753 1170.200 748 C1168.500 744.500 1167.500 741 1167.400 737 C1167.500 733 1168 730 1169.300 727 Z"/>
<path fill="url(#ms)" d="M1319.600 755.300 C1324 753 1328.500 751 1333.300 749.800 C1342 748 1351 746.500 1360.800 745.250 C1370 742 1379 738 1388.300 733.300 C1395 730 1401 726.500 1406.700 722.300 C1409.500 719.500 1411 716.500 1412.200 713.200 C1412.500 709 1413 705.500 1414 702 C1417 698 1421 695 1425 692 C1428.500 689.500 1432 688.500 1436 687.900 C1439 689 1441.500 691.500 1442.400 694.800 C1443 702 1441.500 708.500 1439.700 715 C1437.500 721.500 1435 727.500 1432.300 733.300 C1429 737.500 1425.500 741 1421.300 744.300 C1410 749 1399 753 1388.300 757.200 C1380.500 761 1373 765.500 1366.300 770 C1364 772 1362 774.500 1360.800 777.300 C1371 783.500 1381.500 789.500 1392 795.700 L1389.300 799.300 C1376.500 792.500 1364 786 1351.700 779.200 C1348 779.500 1344.500 779.500 1340.700 779.200 C1335.500 776 1330.500 772.500 1326 768.200 C1323 764 1321 760 1319.600 755.300 Z"/>
<path fill="#8a8a90" opacity=".5" d="M1175 735 C1195 737 1215 745 1240 752 C1220 755 1195 752 1176 744 Z M1418 700 C1426 694 1434 692 1438 697 C1436 706 1432 716 1426 724 C1424 716 1421 708 1418 700 Z M1335 757 C1350 753 1368 752 1385 748 C1370 758 1352 764 1337 764 Z"/>
<path fill="#8a2f2c" opacity=".8" d="M1203.200 762.700 C1212 763.500 1222 766 1231 769 C1240 772 1249 773.700 1258 772.500 C1250 776 1240 775 1230 772.500 C1220 769.500 1210 766 1203.200 762.700 Z"/>
</g>
</svg>
</div>
<div id="infobar"></div>
<div class="t inf" style="left:283px">ISO 100</div>
<div class="t inf" style="left:358px">1/125 Í</div>
<div class="t inf" style="left:424.2px">f/16</div>
<div class="t inf" style="left:469.7px">85 mm</div>
<div class="t inf" style="left:789px;width:200px;text-align:center;top:1071.5px;font-size:15.8px">AA9R7744.cr2</div>
<div class="cb" style="left:1367.5px;top:1076.8px;width:13.5px;height:13.5px;border:1.5px solid #8c8c8c;background:#1f1f1f"></div>
<div class="dot" style="left:1394px;top:1082.3px"></div>
<div class="dot" style="left:1411.3px;top:1082.3px"></div>
<div class="dot" style="left:1429px;top:1082.3px"></div>
<div class="dot" style="left:1446.5px;top:1082.3px"></div>
<div class="dot" style="left:1464px;top:1082.3px"></div>
<div class="hl" style="left:1515px;top:381.3px;width:405px"></div>
<div class="hl" style="left:1515px;top:542.8px;width:405px"></div>
<div class="hl" style="left:1515px;top:702.4px;width:405px"></div>
<div class="hl" style="left:1515px;top:802.7px;width:405px"></div>
<div class="hl" style="left:1515px;top:931.8px;width:405px"></div>
<div class="hl" style="left:1515px;top:1062.5px;width:405px"></div>
<div class="hl" style="left:1515px;top:1088.2px;width:405px"></div>
<div class="hl" style="left:1515px;top:1113px;width:405px"></div>
<div class="hl" style="left:1515px;top:1138.8px;width:405px"></div>
<div class="t sh" style="left:1544.5px;top:153.8px">부분 조정</div>
<div class="t sh" style="left:1544.5px;top:384.2px">화이트 밸런스</div>
<div class="t sh" style="left:1544.5px;top:545.1px">노출</div>
<div class="t sh" style="left:1544.5px;top:705.3px">하이 다이나믹레인지</div>
<div class="t sh" style="left:1544.5px;top:805.3px">샤프닝</div>
<div class="t sh" style="left:1544.5px;top:934.7px">선명도</div>
<div class="t sh" style="left:1544.5px;top:1065.1px">노이즈 제거</div>
<div class="t sh" style="left:1544.5px;top:1090.3px">모아레</div>
<div class="t sh" style="left:1544.5px;top:1115.5px">색 편집기</div>
<div class="t sh" style="left:1544.5px;top:1141.0px">퍼플 프린징</div>
<div id="layer"></div><div id="lcb"></div><div class="t" style="left:1567.5px;top:187.5px;font-size:14.3px;color:#1d1d1d;line-height:20px">배경</div>
<div class="btn" style="left:1837px;top:349.5px;width:33.5px;height:21px;border-color:#606060"></div>
<div class="btn" style="left:1875.5px;top:349.5px;width:34px;height:21px;border-color:#3b3b3b"></div>
<div id="tabline"></div><div id="tab1"></div>
<div class="t" style="left:1515px;width:203px;text-align:center;top:415.5px;font-size:11.6px;font-weight:bold;color:#f0861a;line-height:20px">그레이</div>
<div class="t" style="left:1718px;width:202px;text-align:center;top:415.5px;font-size:11.6px;font-weight:bold;color:#c4c4c4;line-height:20px">스킨톤</div>
<div class="t lb" style="top:448.0px">모드</div>
<div class="sel" style="left:1636px;top:448.4px;width:201px"><span>사용자 지정</span></div>
<div class="t lb" style="top:478.3px">캘빈</div>
<div class="trk" style="left:1636px;top:488.0px;width:201px"></div>
<div class="tk" style="left:1655.8px;top:487.9px"></div>
<div class="tk" style="left:1675.8px;top:487.9px"></div>
<div class="tk" style="left:1695.7px;top:487.9px"></div>
<div class="tk" style="left:1715.7px;top:487.9px"></div>
<div class="tk" style="left:1735.7px;top:487.9px"></div>
<div class="tk" style="left:1755.6px;top:487.9px"></div>
<div class="tk" style="left:1775.6px;top:487.9px"></div>
<div class="tk" style="left:1795.6px;top:487.9px"></div>
<div class="tk" style="left:1815.6px;top:487.9px"></div>
<div class="th" style="left:1694.9px;top:481.3px"></div>
<div class="val" style="top:480.1px">5458</div>
<div class="t lb" style="top:507.79999999999995px">틴트</div>
<div class="trk" style="left:1636px;top:517.5px;width:201px"></div>
<div class="tk" style="left:1655.8px;top:517.4px"></div>
<div class="tk" style="left:1675.8px;top:517.4px"></div>
<div class="tk" style="left:1695.7px;top:517.4px"></div>
<div class="tk" style="left:1715.7px;top:517.4px"></div>
<div class="tk" style="left:1735.7px;top:517.4px"></div>
<div class="tk" style="left:1755.6px;top:517.4px"></div>
<div class="tk" style="left:1775.6px;top:517.4px"></div>
<div class="tk" style="left:1795.6px;top:517.4px"></div>
<div class="tk" style="left:1815.6px;top:517.4px"></div>
<div class="th" style="left:1722.4px;top:510.8px"></div>
<div class="val" style="top:509.6px">-1.0</div>
<div class="t lb" style="top:579.5px">노출</div>
<div class="trk" style="left:1636px;top:589.3px;width:201px"></div>
<div class="tk" style="left:1655.8px;top:589.1999999999999px"></div>
<div class="tk" style="left:1675.8px;top:589.1999999999999px"></div>
<div class="tk" style="left:1695.7px;top:589.1999999999999px"></div>
<div class="tk" style="left:1715.7px;top:589.1999999999999px"></div>
<div class="tk" style="left:1735.7px;top:589.1999999999999px"></div>
<div class="tk" style="left:1755.6px;top:589.1999999999999px"></div>
<div class="tk" style="left:1775.6px;top:589.1999999999999px"></div>
<div class="tk" style="left:1795.6px;top:589.1999999999999px"></div>
<div class="tk" style="left:1815.6px;top:589.1999999999999px"></div>
<div class="th" style="left:1725.2px;top:582.5999999999999px"></div>
<div class="val" style="top:581.4px">0</div>
<div class="t lb" style="top:609.1px">콘트라스트</div>
<div class="trk" style="left:1636px;top:618.9px;width:201px"></div>
<div class="tk" style="left:1655.8px;top:618.8px"></div>
<div class="tk" style="left:1675.8px;top:618.8px"></div>
<div class="tk" style="left:1695.7px;top:618.8px"></div>
<div class="tk" style="left:1715.7px;top:618.8px"></div>
<div class="tk" style="left:1735.7px;top:618.8px"></div>
<div class="tk" style="left:1755.6px;top:618.8px"></div>
<div class="tk" style="left:1775.6px;top:618.8px"></div>
<div class="tk" style="left:1795.6px;top:618.8px"></div>
<div class="tk" style="left:1815.6px;top:618.8px"></div>
<div class="th" style="left:1725.2px;top:612.1999999999999px"></div>
<div class="val" style="top:611.0px">0</div>
<div class="t lb" style="top:638.6px">밝기</div>
<div class="trk" style="left:1636px;top:648.4px;width:201px"></div>
<div class="tk" style="left:1655.8px;top:648.3px"></div>
<div class="tk" style="left:1675.8px;top:648.3px"></div>
<div class="tk" style="left:1695.7px;top:648.3px"></div>
<div class="tk" style="left:1715.7px;top:648.3px"></div>
<div class="tk" style="left:1735.7px;top:648.3px"></div>
<div class="tk" style="left:1755.6px;top:648.3px"></div>
<div class="tk" style="left:1775.6px;top:648.3px"></div>
<div class="tk" style="left:1795.6px;top:648.3px"></div>
<div class="tk" style="left:1815.6px;top:648.3px"></div>
<div class="th" style="left:1725.2px;top:641.6999999999999px"></div>
<div class="val" style="top:640.5px">0</div>
<div class="t lb" style="top:668.0px">채도</div>
<div class="trk" style="left:1636px;top:677.8px;width:201px"></div>
<div class="tk" style="left:1655.8px;top:677.6999999999999px"></div>
<div class="tk" style="left:1675.8px;top:677.6999999999999px"></div>
<div class="tk" style="left:1695.7px;top:677.6999999999999px"></div>
<div class="tk" style="left:1715.7px;top:677.6999999999999px"></div>
<div class="tk" style="left:1735.7px;top:677.6999999999999px"></div>
<div class="tk" style="left:1755.6px;top:677.6999999999999px"></div>
<div class="tk" style="left:1775.6px;top:677.6999999999999px"></div>
<div class="tk" style="left:1795.6px;top:677.6999999999999px"></div>
<div class="tk" style="left:1815.6px;top:677.6999999999999px"></div>
<div class="th" style="left:1725.2px;top:671.0999999999999px"></div>
<div class="val" style="top:669.9px">0</div>
<div class="t lb" style="top:738.5px">하이라이트</div>
<div class="trk" style="left:1645px;top:748.4px;width:192px"></div>
<div class="tk" style="left:1655.8px;top:748.3px"></div>
<div class="tk" style="left:1675.8px;top:748.3px"></div>
<div class="tk" style="left:1695.7px;top:748.3px"></div>
<div class="tk" style="left:1715.7px;top:748.3px"></div>
<div class="tk" style="left:1735.7px;top:748.3px"></div>
<div class="tk" style="left:1755.6px;top:748.3px"></div>
<div class="tk" style="left:1775.6px;top:748.3px"></div>
<div class="tk" style="left:1795.6px;top:748.3px"></div>
<div class="tk" style="left:1815.6px;top:748.3px"></div>
<div class="th" style="left:1625.5px;top:741.6999999999999px"></div>
<div class="val" style="top:740.5px">0</div>
<div class="t lb" style="top:767.7px">셰도우</div>
<div class="trk" style="left:1645px;top:777.5px;width:192px"></div>
<div class="tk" style="left:1655.8px;top:777.4px"></div>
<div class="tk" style="left:1675.8px;top:777.4px"></div>
<div class="tk" style="left:1695.7px;top:777.4px"></div>
<div class="tk" style="left:1715.7px;top:777.4px"></div>
<div class="tk" style="left:1735.7px;top:777.4px"></div>
<div class="tk" style="left:1755.6px;top:777.4px"></div>
<div class="tk" style="left:1775.6px;top:777.4px"></div>
<div class="tk" style="left:1795.6px;top:777.4px"></div>
<div class="tk" style="left:1815.6px;top:777.4px"></div>
<div class="th" style="left:1625.5px;top:770.8px"></div>
<div class="val" style="top:769.6px">0</div>
<div class="t lb" style="top:838.5px">수치</div>
<div class="trk" style="left:1636px;top:848.4px;width:201px"></div>
<div class="tk" style="left:1655.8px;top:848.3px"></div>
<div class="tk" style="left:1675.8px;top:848.3px"></div>
<div class="tk" style="left:1695.7px;top:848.3px"></div>
<div class="tk" style="left:1715.7px;top:848.3px"></div>
<div class="tk" style="left:1735.7px;top:848.3px"></div>
<div class="tk" style="left:1755.6px;top:848.3px"></div>
<div class="tk" style="left:1775.6px;top:848.3px"></div>
<div class="tk" style="left:1795.6px;top:848.3px"></div>
<div class="tk" style="left:1815.6px;top:848.3px"></div>
<div class="th" style="left:1661.4px;top:841.6999999999999px"></div>
<div class="val" style="top:840.5px">180</div>
<div class="t lb" style="top:867.8px">반경</div>
<div class="trk" style="left:1636px;top:877.6px;width:201px"></div>
<div class="tk" style="left:1655.8px;top:877.5px"></div>
<div class="tk" style="left:1675.8px;top:877.5px"></div>
<div class="tk" style="left:1695.7px;top:877.5px"></div>
<div class="tk" style="left:1715.7px;top:877.5px"></div>
<div class="tk" style="left:1735.7px;top:877.5px"></div>
<div class="tk" style="left:1755.6px;top:877.5px"></div>
<div class="tk" style="left:1775.6px;top:877.5px"></div>
<div class="tk" style="left:1795.6px;top:877.5px"></div>
<div class="tk" style="left:1815.6px;top:877.5px"></div>
<div class="th" style="left:1677.3px;top:870.9px"></div>
<div class="val" style="top:869.7px">0.8</div>
<div class="t lb" style="top:897.1px">임계값</div>
<div class="trk" style="left:1636px;top:906.8px;width:201px"></div>
<div class="tk" style="left:1655.8px;top:906.6999999999999px"></div>
<div class="tk" style="left:1675.8px;top:906.6999999999999px"></div>
<div class="tk" style="left:1695.7px;top:906.6999999999999px"></div>
<div class="tk" style="left:1715.7px;top:906.6999999999999px"></div>
<div class="tk" style="left:1735.7px;top:906.6999999999999px"></div>
<div class="tk" style="left:1755.6px;top:906.6999999999999px"></div>
<div class="tk" style="left:1775.6px;top:906.6999999999999px"></div>
<div class="tk" style="left:1795.6px;top:906.6999999999999px"></div>
<div class="tk" style="left:1815.6px;top:906.6999999999999px"></div>
<div class="th" style="left:1641.5px;top:900.0999999999999px"></div>
<div class="val" style="top:898.9px">1.0</div>
<div class="t lb" style="top:967.9px">방법</div>
<div class="sel" style="left:1636px;top:968.4000000000001px;width:273px"><span>내추럴</span></div>
<div class="t lb" style="top:998.1px">선명도</div>
<div class="trk" style="left:1636px;top:1008.0px;width:201px"></div>
<div class="tk" style="left:1655.8px;top:1007.9px"></div>
<div class="tk" style="left:1675.8px;top:1007.9px"></div>
<div class="tk" style="left:1695.7px;top:1007.9px"></div>
<div class="tk" style="left:1715.7px;top:1007.9px"></div>
<div class="tk" style="left:1735.7px;top:1007.9px"></div>
<div class="tk" style="left:1755.6px;top:1007.9px"></div>
<div class="tk" style="left:1775.6px;top:1007.9px"></div>
<div class="tk" style="left:1795.6px;top:1007.9px"></div>
<div class="tk" style="left:1815.6px;top:1007.9px"></div>
<div class="th" style="left:1725.2px;top:1001.3px"></div>
<div class="val" style="top:1000.1px">0</div>
<div class="t lb" style="top:1027.5px">구조</div>
<div class="trk" style="left:1636px;top:1037.3px;width:201px"></div>
<div class="tk" style="left:1655.8px;top:1037.2px"></div>
<div class="tk" style="left:1675.8px;top:1037.2px"></div>
<div class="tk" style="left:1695.7px;top:1037.2px"></div>
<div class="tk" style="left:1715.7px;top:1037.2px"></div>
<div class="tk" style="left:1735.7px;top:1037.2px"></div>
<div class="tk" style="left:1755.6px;top:1037.2px"></div>
<div class="tk" style="left:1775.6px;top:1037.2px"></div>
<div class="tk" style="left:1795.6px;top:1037.2px"></div>
<div class="tk" style="left:1815.6px;top:1037.2px"></div>
<div class="th" style="left:1725.2px;top:1030.6px"></div>
<div class="val" style="top:1029.3999999999999px">0</div>
<div id="ybox"></div>
<svg id="ico" width="1920" height="1200" viewBox="0 0 1920 1200" style="left:0;top:0;z-index:5">
<defs>
<linearGradient id="g" x1="0" y1="0" x2="0" y2="1"><stop offset="0" stop-color="#b6b9ba"/><stop offset="1" stop-color="#808384"/></linearGradient>
<linearGradient id="gd" x1="0" y1="0" x2="0" y2="1"><stop offset="0" stop-color="#565656"/><stop offset="1" stop-color="#424242"/></linearGradient>
<symbol id="brush" viewBox="0 0 20 20"><path d="M13.5 0 L19.2 5.2 L16.1 8.3 L10.9 3.6 Z"/><path d="M10.4 4.6 C7.5 5.5 4.5 8 4 11.5 C3.7 14 3 17 0 18.5 C2.5 20 7 19.8 10 17 C13 14.3 15 11.5 15.5 9 Z"/></symbol>
<symbol id="dd" viewBox="0 0 6 3.4"><path d="M0 0 H6 L3 3.4 Z"/></symbol>
</defs>
<!-- apple logo -->
<g fill="#2a2a2a" transform="translate(37 13.700) scale(.95) translate(-37 -14.600)"><path d="M43.2 15.6 c0-3 2.4-4.4 2.5-4.5 c-1.4-2-3.500-2.300-4.300-2.300 c-1.800-.2-3.500 1.100-4.400 1.100 c-.900 0-2.300-1-3.800-1 c-1.900 0-3.700 1.100-4.700 2.900 c-2 3.500-.5 8.700 1.500 11.500 c1 1.400 2.100 3 3.600 2.900 c1.500-.1 2-.9 3.700-.9 c1.700 0 2.200.9 3.800.9 c1.600 0 2.600-1.400 3.500-2.800 c1.100-1.600 1.600-3.200 1.600-3.300 c0 0-3-1.200-3-4.500z"/><path d="M40.300 6.900 c.8-1 1.300-2.300 1.200-3.700 c-1.200.1-2.500.8-3.400 1.800 c-.7.900-1.400 2.200-1.200 3.500 c1.300.1 2.600-.6 3.400-1.600z"/></g>
<!-- toolbar left -->
<g fill="url(#g)">
<path d="M38.300 71.500 H47.500 V81.800 H53.200 L42.800 92.200 L32 81.800 H38.300 Z"/>
<path d="M32 93.200 H34.400 V96.300 H50.900 V93.200 H53.200 V99.500 H32 Z"/>
</g>
<g fill="url(#gd)"><path d="M83 79 H109.400 V96 H83 Z M96.200 82 a5.500 5.500 0 1 0 .01 0 Z" fill-rule="evenodd"/><path d="M90.500 79 V77.600 q0-1 1-1 H100.400 q1 0 1 1 V79 h-1.600 v-.8 h-8.700 v.8 z"/></g>
<g fill="url(#g)" stroke="none">
<path d="M145.500 76.100 A11.400 11.400 0 1 1 134.100 87.500 H139.300 A6.200 6.200 0 1 0 145.500 81.300 Z"/><path d="M146.200 71.400 L138 79 L146.200 86 Z"/>
<path d="M179.800 76.100 A11.400 11.400 0 1 0 191.200 87.500 H186 A6.200 6.200 0 1 1 179.800 81.300 Z"/><path d="M179.100 71.400 L187.300 79 L179.100 86 Z"/>
<path d="M212 81.200 q0-2.200 2.200-2.200 h7.300 l2.300 2.300 h2.400 v6.500 h8.300 v6.500 q0 2.200-2.200 2.200 h-18.100 q-2.200 0-2.200-2.200 z"/>
<path d="M227.400 79.400 V87.400 H235.600 L233 84.900 C235.200 82.900 238.600 83 242.400 85.600 C241.200 79.400 234.600 76.600 229.900 81.800 Z"/>
</g>
<g fill="none" stroke="url(#g)" stroke-width="1.700">
<path d="M254.800 77.200 H276.100" stroke="#a9acad" stroke-width="3"/>
<path d="M261.200 75.800 V73.200 H269.800 V75.800" stroke="#b3b6b7"/>
<path d="M256.800 80 L258.300 97.200 H272.700 L274.200 80 Z"/>
<path d="M261.600 80 V97 M265.500 80 V97 M269.400 80 V97" stroke="#999c9d" stroke-width="1.800"/>
</g>
<g fill="url(#g)">
<rect x="298.400" y="74" width="2.800" height="15.600"/>
<path d="M300.800 81.800 L311 73.400 V78.600 C318 78.600 322.300 83 322.300 89.300 C322.300 94 319 97.600 313.800 98.800 C316.300 96.300 317 93.500 316.200 90.800 C315.300 87.600 313.500 85.500 311 85.500 V90.200 Z"/>
<path d="M346 81.800 L356.500 73.400 V78.600 C364 78.600 368.700 83 368.700 89.300 C368.700 94 365.200 97.600 359.800 98.800 C362.500 96.300 363.200 93.500 362.300 90.800 C361.300 87.600 359.300 85.500 356.500 85.500 V90.200 Z"/>
</g>
<path fill="url(#gd)" d="M400.400 82 L391 74 V79 C384.300 79 380 83 380 88.500 C380 93 383.200 96.200 388 97.300 C385.600 95 385 92.500 385.800 90 C386.700 87.200 388.500 85.300 391 85.300 V89.800 Z"/>
<g fill="none" stroke="#f08c00" stroke-width="2"><rect x="421.800" y="85.600" width="21.300" height="12.500"/><path d="M426.100 85.600 V81.400 H447.400 V93.900 H443.100 M430.400 81.400 V77.200 H451.600 V89.700 H447.400"/></g>
<!-- center tool group -->
<rect x="676.500" y="71.300" width="513" height="29.300" rx="5.500" fill="none" stroke="#4e4e4e" stroke-width="1.400"/>
<g fill="#8c8c8c">
<use href="#dd" x="716.400" y="89" width="5.800" height="3.300"/><use href="#dd" x="767" y="89" width="5.800" height="3.300"/><use href="#dd" x="819" y="89" width="5.800" height="3.300"/><use href="#dd" x="869.700" y="89" width="5.800" height="3.300"/><use href="#dd" x="921.700" y="89" width="5.800" height="3.300"/><use href="#dd" x="972.200" y="89" width="5.800" height="3.300"/><use href="#dd" x="1065.200" y="89" width="5.800" height="3.300"/><use href="#dd" x="1116" y="89" width="5.800" height="3.300"/><use href="#dd" x="1167.700" y="89" width="5.800" height="3.300"/>
</g>
<g fill="none" stroke="#b2b3b4" stroke-width="1.700" stroke-linejoin="miter">
<path d="M690.700 77.800 L707.800 87.600 L701.800 89 L709.200 95 L707 97 L699.500 91 L697.800 95.600 Z"/>
<g stroke-width="1.500" stroke-linecap="round" stroke-linejoin="round"><path d="M747.500 88 V80.800 a1.400 1.400 0 0 1 2.800 0 V86 M750.300 80 V79.300 a1.400 1.400 0 0 1 2.800 0 V86 M753.100 80 a1.400 1.400 0 0 1 2.800 0 V86 M755.900 82.300 a1.400 1.400 0 0 1 2.800 0 V89.500 q0 5.500-5 5.500 h-3 q-2 0-3.300-1.800 l-4-5.500 q-1-1.800.4-2.300 q1.300-.4 2.500 1.100 l1.500 2"/></g>
<path d="M796.600 83.300 C795.500 87 794.500 91 794 95.700 H811.300 C810.800 91 809.800 87 808.700 83.300"/>
<path d="M797.500 78.200 H807.800 L809.500 84 H795.800 Z" fill="#b2b3b4" stroke="none"/>
<path d="M848.600 76 V92.300 H863.400 M842.700 81.300 H858.500 V97.400" stroke-width="2.500"/>
<path d="M906.300 79.300 A8.700 8.700 0 1 1 897.600 88" stroke-width="2.700"/><path d="M907 75.200 L901.500 79.500 L907 83.500 Z" fill="#b2b3b4" stroke="none"/><path d="M895.700 88 H913.500 M906.300 81 V94" stroke-width="1.300"/>
<path d="M953.600 77.500 L950 95 M958.400 77.500 L962 95" stroke-width="2.200"/>
<circle cx="1008" cy="87" r="8.100" stroke-width="2.300"/>
</g>
<use href="#brush" x="1039.700" y="76.800" width="19" height="19" fill="#b2b3b4"/>
<g fill="none" stroke="#f7941d" stroke-width="2.500" stroke-linejoin="round"><path d="M1095.500 78.500 H1107 q2 0 2 2 V90.500 q0 2-2 2 H1097 L1092.300 94.800 L1093.500 91.500 V80.500 q0-2 2-2 Z"/><path d="M1098.800 85.300 H1104.600"/></g>
<path d="M1143.800 95.800 V84.800 L1147.400 88.300 L1156.600 78.600 L1161.300 83.500 L1151.600 92.600 L1154.800 95.800 Z" fill="#b2b3b4"/>
<!-- right toolbar -->
<g fill="url(#g)">
<path d="M1467 75.400 H1498.300 V99.300 H1467 Z M1469.500 77.900 V96.800 H1495.800 V77.900 Z" fill-rule="evenodd"/>
<rect x="1479.600" y="80.300" width="5.800" height="3.200"/><rect x="1471.600" y="85.700" width="6" height="3.300"/><rect x="1479.600" y="85.700" width="5.800" height="3.300"/><rect x="1487.600" y="85.700" width="6" height="3.300"/><rect x="1479.600" y="91.100" width="5.800" height="3.200"/>
<path d="M1534.600 75.300 q1.200-1.800 2.400 0 L1547.700 95.300 q.9 1.900-1.200 1.900 H1525.100 q-2.100 0-1.200-1.900 Z M1534.600 81.500 L1535 90.200 H1536.600 L1537 81.500 Z M1535.800 91.600 a1.400 1.400 0 1 0 .01 0 Z" fill-rule="evenodd"/>
</g>
<g fill="#9a9c9d">
<g id="gr"><rect x="1578.700" y="76" width="3.600" height="3.500"/><rect x="1587" y="76" width="3.200" height="3.500"/><rect x="1591.700" y="76" width="3.300" height="3.500"/><rect x="1596.500" y="76" width="3.500" height="3.500"/></g>
<use href="#gr" y="5.600"/><use href="#gr" y="10.800"/><use href="#gr" y="17.700"/>
<path d="M1583.900 72.500 h1.100 v29.200 h-1.100 z M1574.500 91 h29.500 v1.100 h-29.500 z" fill="#c4c6c7"/>
</g>
<text x="1631.500" y="97.200" font-size="30" font-weight="bold" fill="url(#g)" font-family="Liberation Sans, sans-serif">A</text>
<use href="#dd" x="1653.600" y="101.400" width="8" height="4.300" fill="#7a7a7a"/>
<path d="M1706 75 V90.500 L1700.600 85.400 L1687.300 97.400 L1682.500 92.300 L1695.500 80.300 L1690.300 75 Z" fill="url(#g)"/>
<path d="M1718.300 97.500 V82 L1723.700 87.100 L1737 75.500 L1741.800 80.600 L1728.800 92.200 L1734 97.500 Z" fill="url(#gd)"/>
<g fill="none" stroke="url(#g)" stroke-width="2">
<path d="M1773.500 81.500 V76.500 H1788 V81.500"/>
<path d="M1773 92.500 H1768.500 q-1 0-1-1 V83.500 q0-1 1-1 H1793 q1 0 1 1 V91.500 q0 1-1 1 H1788.500" stroke="#a4a7a8"/>
<path d="M1773.300 88 H1788.300 V96 H1773.300 Z" stroke="#8e9192"/>
<path d="M1776.500 90.800 H1785 M1776.500 93.500 H1785" stroke-width="1.500" stroke="#8e9192"/>
</g>
<g transform="translate(1834.300 86.600)" fill="url(#g)"><path fill-rule="evenodd" d="M-2.300 -12 H2.300 L2.800 -8.900 L4.600 -8.100 L7.200 -10.100 L10.100 -7.200 L8.100 -4.600 L8.900 -2.800 L12 -2.300 V2.300 L8.900 2.800 L8.100 4.600 L10.100 7.200 L7.200 10.100 L4.600 8.100 L2.800 8.900 L2.300 12 H-2.300 L-2.800 8.900 L-4.600 8.100 L-7.200 10.100 L-10.100 7.200 L-8.100 4.600 L-8.900 2.800 L-12 2.300 V-2.300 L-8.900 -2.800 L-8.100 -4.600 L-10.100 -7.200 L-7.200 -10.100 L-4.600 -8.100 L-2.800 -8.900 Z M0 -5.600 a5.600 5.600 0 1 0 .01 0 Z"/></g>
<text x="1878" y="97.400" font-size="30" font-weight="bold" fill="url(#g)" font-family="Liberation Sans, sans-serif">?</text>
<g fill="#3a1a1a"><path d="M1458.500 4.500 c6.200 0 10.800 3.600 10.800 8.200 c0 4.600-4.600 8.200-10.800 8.200 c-1 0-2-.1-2.900-.3 c-1.600 1.500-3.700 2.400-5.800 2.600 c1.300-1.200 2-2.700 2.200-4.200 c-2.700-1.500-4.300-3.800-4.300-6.300 c0-4.600 4.600-8.200 10.800-8.200z"/></g>
<g fill="none" stroke="#6b6b6b" stroke-width="1.300" stroke-linejoin="round"><path d="M1493.200 9.200 L1501 18.500 L1497 23.500 V4.800 L1501 9.800 L1493.200 19"/></g><g fill="#333"><circle cx="1491.800" cy="14.200" r="1.300"/><circle cx="1497" cy="14.200" r="1.300"/><circle cx="1502.200" cy="14.200" r="1.300"/></g>
<g fill="#2a2a2a"><path d="M1524 10.800 h4 l6-5 v17 l-6-5 h-4 z"/></g><g fill="none" stroke="#2a2a2a" stroke-width="1.700" stroke-linecap="round"><path d="M1537.500 10 a6 6 0 0 1 0 8.600 M1541.200 7 a10.500 10.500 0 0 1 0 14.600 M1545 4.300 a14.500 14.500 0 0 1 0 20"/></g>
<g fill="none" stroke="#2a2a2a" stroke-width="2.400" stroke-linecap="butt"><path d="M1565.300 10.800 a17.500 17.500 0 0 1 24.700 0 M1569.500 15 a11.600 11.600 0 0 1 16.300 0 M1573.500 19 a6 6 0 0 1 8.300 0"/></g><circle cx="1577.650" cy="22.300" r="1.900" fill="#2a2a2a"/>
<g><rect x="1610" y="8" width="27" height="13.500" rx="2.500" fill="none" stroke="#2a2a2a" stroke-width="1.700"/><path d="M1638.300 11.800 h1 q1.200 0 1.200 1.200 v3.500 q0 1.200-1.200 1.200 h-1 z" fill="#2a2a2a"/><rect x="1612.500" y="10.500" width="22" height="8.500" rx="1" fill="#2a2a2a"/><path d="M1625.500 6.500 L1618 15.500 H1623 L1620.500 23.500 L1629.500 13.500 H1624.300 Z" fill="#e9e9e9" stroke="#2a2a2a" stroke-width="1.200"/></g>
<g fill="none" stroke="#2a2a2a" stroke-width="2.200" stroke-linecap="round"><circle cx="1832.500" cy="12.500" r="6.300"/><path d="M1837.300 17.300 L1843.500 23.500"/></g>
<g fill="#2a2a2a"><rect x="1864.500" y="7.500" width="3.300" height="2.700"/><rect x="1870.500" y="7.500" width="19.500" height="2.700"/><rect x="1864.500" y="13.300" width="3.300" height="2.700"/><rect x="1870.500" y="13.300" width="19.500" height="2.700"/><rect x="1864.500" y="19.100" width="3.300" height="2.700"/><rect x="1870.500" y="19.100" width="19.500" height="2.700"/></g>
<g><path d="M855.500 42.500 q0-1.500 1.500-1.500 h5 l1.500 1.200 h8 q1.500 0 1.500 1.500 v7.800 q0 1.500-1.500 1.500 h-14.500 q-1.500 0-1.500-1.500 z" fill="#0c0d0f"/><rect x="857" y="43.500" width="14.500" height="7" fill="#1a1c20"/><path d="M861.300 43.800 h5.200 v1.600 h-1.500 v4.800 h-2.300 v-4.800 h-1.400 z" fill="#d4d8dc"/><rect x="865" y="50.800" width="5" height="1.300" fill="#2f86d6"/></g>
<g fill="none" stroke="#b0b1b2" stroke-width="1.800"><path d="M9.300 133.300 Q21.200 120.300 33.200 133.300 Q21.200 146.300 9.300 133.300 Z"/></g><circle cx="21.200" cy="132.600" r="4.900" fill="#b0b1b2"/><use href="#dd" x="26.700" y="142.600" width="6" height="3.400" fill="#b0b1b2"/>
<g fill="#b0b1b2"><path d="M46.300 126.700 L50.100 132.200 H47.600 V141.700 H45 V132.200 H42.500 Z"/><path d="M55.600 141.900 L59.400 136.400 H56.900 V126.900 H54.300 V136.400 H51.800 Z"/></g>
<g fill="none" stroke="#b0b1b2"><circle cx="247.500" cy="133" r="7.700" stroke-width="2.300"/><path d="M242.300 138.700 L237.800 143.300" stroke-width="3.600"/></g><use href="#dd" x="252" y="143" width="6" height="3.400" fill="#b0b1b2"/>
<g fill="none" stroke="#a2a3a4" stroke-width="1.500"><rect x="279.700" y="128" width="8.300" height="6.200"/><rect x="291.900" y="128" width="8.300" height="6.200"/><rect x="279.700" y="138.200" width="8.300" height="6.200"/><rect x="291.900" y="138.200" width="8.300" height="6.200"/><rect x="340.700" y="128" width="19.800" height="16.400"/><rect x="345" y="132" width="11.300" height="8.500"/></g>
<rect x="310.100" y="128.300" width="19" height="15.800" fill="none" stroke="#f08c00" stroke-width="2"/>
<rect x="1302.600" y="130.800" width="172" height="10.400" rx="5.200" fill="none" stroke="#454545" stroke-width="1.300"/>
<rect x="1302.700" y="130.900" width="37" height="10.200" rx="5.100" fill="#000" stroke="#b8b8b8" stroke-width="1.500"/><circle cx="1321.400" cy="136" r="3.900" fill="#bdbdbd"/>
<g stroke="#5e5e5e" stroke-width="1.200"><path d="M1359.200 133 V139 M1388.400 133 V139 M1416.300 133 V139 M1444.400 133 V139"/></g>
<g fill="#b0b1b2"><circle cx="1285.700" cy="131.500" r="3.500"/><path d="M1278.400 141.200 q0-3.400 4.300-4.300 q1.500-.4 1.300-2 h3.400 q-.2 1.600 1.300 2 q4.300.9 4.300 4.300 z"/><circle cx="1495" cy="131.300" r="4.900"/><path d="M1484.800 144 q0-4.600 6-5.800 q2-.5 1.800-2.800 h4.800 q-.2 2.300 1.800 2.800 q6 1.200 6 5.800 z"/></g>
<g fill="none" stroke="#a3a4a5" stroke-width="2" stroke-linejoin="round">
<path d="M1528.600 129 q0-1.200 1.200-1.200 h5.700 l2.300 2.800 h9.100 q1.200 0 1.200 1.200 v9.800 q0 1.200-1.200 1.200 h-17.100 q-1.200 0-1.200-1.200 z"/>
<path d="M1565 129.300 h19.200 v12.400 h-19.200 z M1570.500 129 v-2.700 h8 v2.700"/><circle cx="1574.600" cy="135.600" r="3.700"/>
<circle cx="1610.300" cy="131.600" r="5.700"/><circle cx="1604.700" cy="139" r="5.700"/><circle cx="1616.100" cy="139" r="5.700"/>
<path d="M1637 142.800 V133 C1641 133.500 1645 131 1648.300 126.600 L1650.200 129.500 L1651.500 128.200 L1653.300 131.300 L1656 130.300 V142.800 Z"/>
<ellipse cx="1682.600" cy="134.400" rx="3.500" ry="8.800"/>
<path d="M1713.300 124 V140.300 H1729 M1708 129.500 H1723.800 V145.600" stroke-width="2.200"/>
<circle cx="1755" cy="133.300" r="6.800" stroke-width="2.200"/><path d="M1750 138.800 L1745.600 143.600" stroke-width="3.300"/>
<path d="M1817.500 126.700 H1835.500 V142.400 H1817.500 Z"/><path d="M1820.500 130.800 H1832.500 M1820.500 134.500 H1832.500 M1820.500 138.200 H1832.500" stroke-width="1.700"/>
<circle cx="1862.900" cy="135.100" r="8.900" stroke-width="2.100"/>
<path d="M1901.300 130.200 L1905.600 134.600 L1901.300 139 M1906.800 130.200 L1911.100 134.600 L1906.800 139" stroke-width="1.500" stroke-linejoin="miter"/>
</g>
<text x="1859.600" y="140.700" font-size="15.500" font-weight="bold" font-style="italic" fill="#a3a4a5" font-family="Liberation Serif, serif">i</text>
<use href="#brush" x="1781" y="124.700" width="19.300" height="19.600" fill="#f7941d"/>
<defs><linearGradient id="ol" x1="0" y1="0" x2="1" y2="0"><stop offset="0" stop-color="#d27600" stop-opacity="0"/><stop offset=".3" stop-color="#e07e00"/><stop offset=".7" stop-color="#e07e00"/><stop offset="1" stop-color="#d27600" stop-opacity="0"/></linearGradient></defs>
<path d="M1733 153.100 H1786.600 L1790.600 148.300 L1794.600 153.100 H1848" fill="none" stroke="url(#ol)" stroke-width="1.700"/>
<path d="M1733 153.100 H1848" fill="none" stroke="none"/>
<path d="M1526.800 159.6 H1537.800 L1532.300 168.9 Z" fill="#9b9b9b"/>
<text x="1836" y="168.9" font-size="15.300" font-weight="bold" fill="url(#g)" stroke="#9fa1a2" stroke-width=".45" font-family="Liberation Sans, sans-serif">?</text>
<path transform="translate(1855.5 156.7)" fill="url(#g)" d="M13 0 V7.200 L10.700 4.900 L4.900 10.700 L7.200 13 H0 V5.800 L2.300 8.100 L8.100 2.300 L5.800 0 Z"/>
<g transform="translate(1875.7 155.6)" fill="url(#g)"><rect x="0" y=".3" width="1.900" height="8.600"/><path d="M1.600 4.700 L7.300 0 V2.900 C11.200 2.900 13.500 5.400 13.500 8.900 C13.500 11.500 11.700 13.500 8.800 14.200 C10.200 12.800 10.600 11.200 10.100 9.700 C9.600 7.900 8.700 6.800 7.300 6.800 V9.400 Z"/></g>
<g fill="#c2c3c4"><rect x="1899.200" y="160.6" width="3" height="2.900"/><rect x="1903.400" y="160.6" width="3" height="2.900"/><rect x="1907.600" y="160.6" width="3" height="2.900"/></g>
<path d="M1526.800 390.0 H1537.800 L1532.300 399.3 Z" fill="#9b9b9b"/>
<use href="#brush" x="1628.5" y="387.4" width="11.200" height="11.400" fill="#8f9091"/>
<text x="1792.8" y="400.0" font-size="15.300" font-weight="bold" fill="url(#g)" stroke="#9fa1a2" stroke-width=".45" font-family="Liberation Sans, sans-serif">?</text>
<text x="1813.3" y="400.0" font-size="15.300" font-weight="bold" fill="url(#g)" stroke="#9fa1a2" stroke-width=".3" font-family="Liberation Sans, sans-serif">A</text>
<path transform="translate(1834 387.8)" fill="url(#g)" d="M13 0 V7.200 L10.700 4.900 L4.900 10.700 L7.200 13 H0 V5.800 L2.300 8.100 L8.100 2.300 L5.800 0 Z"/>
<g transform="translate(1854 386.7)" fill="url(#g)"><rect x="0" y=".3" width="1.900" height="8.600"/><path d="M1.600 4.700 L7.300 0 V2.900 C11.200 2.900 13.500 5.400 13.500 8.900 C13.500 11.500 11.700 13.500 8.800 14.200 C10.200 12.800 10.600 11.200 10.100 9.700 C9.600 7.900 8.700 6.800 7.300 6.800 V9.400 Z"/></g>
<g fill="url(#g)"><rect x="1877" y="388.8" width="12.300" height="2"/><rect x="1877" y="392.3" width="12.300" height="2"/><rect x="1877" y="395.8" width="12.300" height="2"/></g>
<g fill="#c2c3c4"><rect x="1899.200" y="391.2" width="3" height="2.900"/><rect x="1903.400" y="391.2" width="3" height="2.900"/><rect x="1907.600" y="391.2" width="3" height="2.900"/></g>
<path d="M1526.800 550.9 H1537.800 L1532.300 560.2 Z" fill="#9b9b9b"/>
<use href="#brush" x="1578.5" y="548.3" width="11.200" height="11.400" fill="#8f9091"/>
<text x="1792.8" y="560.9" font-size="15.300" font-weight="bold" fill="url(#g)" stroke="#9fa1a2" stroke-width=".45" font-family="Liberation Sans, sans-serif">?</text>
<text x="1813.3" y="560.9" font-size="15.300" font-weight="bold" fill="url(#g)" stroke="#9fa1a2" stroke-width=".3" font-family="Liberation Sans, sans-serif">A</text>
<path transform="translate(1834 548.7)" fill="url(#g)" d="M13 0 V7.200 L10.700 4.900 L4.900 10.700 L7.200 13 H0 V5.800 L2.300 8.100 L8.100 2.300 L5.800 0 Z"/>
<g transform="translate(1854 547.6)" fill="url(#g)"><rect x="0" y=".3" width="1.900" height="8.600"/><path d="M1.600 4.700 L7.300 0 V2.900 C11.200 2.900 13.500 5.400 13.500 8.900 C13.500 11.500 11.700 13.500 8.800 14.200 C10.200 12.800 10.600 11.200 10.100 9.700 C9.600 7.900 8.700 6.800 7.300 6.800 V9.400 Z"/></g>
<g fill="url(#g)"><rect x="1877" y="549.7" width="12.300" height="2"/><rect x="1877" y="553.2" width="12.300" height="2"/><rect x="1877" y="556.7" width="12.300" height="2"/></g>
<g fill="#c2c3c4"><rect x="1899.200" y="552.1" width="3" height="2.900"/><rect x="1903.400" y="552.1" width="3" height="2.900"/><rect x="1907.600" y="552.1" width="3" height="2.900"/></g>
<path d="M1526.800 711.1 H1537.800 L1532.300 720.4 Z" fill="#9b9b9b"/>
<use href="#brush" x="1663.0" y="708.5" width="11.200" height="11.400" fill="#8f9091"/>
<text x="1792.8" y="721.1" font-size="15.300" font-weight="bold" fill="url(#g)" stroke="#9fa1a2" stroke-width=".45" font-family="Liberation Sans, sans-serif">?</text>
<text x="1813.3" y="721.1" font-size="15.300" font-weight="bold" fill="url(#g)" stroke="#9fa1a2" stroke-width=".3" font-family="Liberation Sans, sans-serif">A</text>
<path transform="translate(1834 708.9)" fill="url(#g)" d="M13 0 V7.200 L10.700 4.900 L4.900 10.700 L7.200 13 H0 V5.800 L2.300 8.100 L8.100 2.300 L5.800 0 Z"/>
<g transform="translate(1854 707.8)" fill="url(#g)"><rect x="0" y=".3" width="1.900" height="8.600"/><path d="M1.600 4.700 L7.300 0 V2.900 C11.200 2.900 13.500 5.400 13.500 8.900 C13.500 11.500 11.700 13.500 8.800 14.200 C10.200 12.800 10.600 11.200 10.100 9.700 C9.600 7.900 8.700 6.800 7.300 6.800 V9.400 Z"/></g>
<g fill="url(#g)"><rect x="1877" y="709.9" width="12.300" height="2"/><rect x="1877" y="713.4" width="12.300" height="2"/><rect x="1877" y="716.9" width="12.300" height="2"/></g>
<g fill="#c2c3c4"><rect x="1899.200" y="712.3" width="3" height="2.900"/><rect x="1903.400" y="712.3" width="3" height="2.900"/><rect x="1907.600" y="712.3" width="3" height="2.900"/></g>
<path d="M1526.800 811.1 H1537.800 L1532.300 820.4 Z" fill="#9b9b9b"/>
<use href="#brush" x="1589.8" y="808.5" width="11.200" height="11.400" fill="#8f9091"/>
<text x="1813.7" y="821.1" font-size="15.300" font-weight="bold" fill="url(#g)" stroke="#9fa1a2" stroke-width=".45" font-family="Liberation Sans, sans-serif">?</text>
<path transform="translate(1834 808.9)" fill="url(#g)" d="M13 0 V7.200 L10.700 4.900 L4.900 10.700 L7.200 13 H0 V5.800 L2.300 8.100 L8.100 2.300 L5.800 0 Z"/>
<g transform="translate(1854 807.8)" fill="url(#g)"><rect x="0" y=".3" width="1.900" height="8.600"/><path d="M1.600 4.700 L7.300 0 V2.900 C11.200 2.900 13.500 5.400 13.500 8.900 C13.500 11.500 11.700 13.500 8.800 14.200 C10.200 12.800 10.600 11.200 10.100 9.700 C9.600 7.900 8.700 6.800 7.300 6.800 V9.400 Z"/></g>
<g fill="url(#g)"><rect x="1877" y="809.9" width="12.300" height="2"/><rect x="1877" y="813.4" width="12.300" height="2"/><rect x="1877" y="816.9" width="12.300" height="2"/></g>
<g fill="#c2c3c4"><rect x="1899.200" y="812.3" width="3" height="2.900"/><rect x="1903.400" y="812.3" width="3" height="2.900"/><rect x="1907.600" y="812.3" width="3" height="2.900"/></g>
<path d="M1526.800 940.5 H1537.800 L1532.300 949.8 Z" fill="#9b9b9b"/>
<use href="#brush" x="1589.8" y="937.9" width="11.200" height="11.400" fill="#8f9091"/>
<text x="1813.7" y="950.5" font-size="15.300" font-weight="bold" fill="url(#g)" stroke="#9fa1a2" stroke-width=".45" font-family="Liberation Sans, sans-serif">?</text>
<path transform="translate(1834 938.3)" fill="url(#g)" d="M13 0 V7.200 L10.700 4.900 L4.900 10.700 L7.200 13 H0 V5.800 L2.300 8.100 L8.100 2.300 L5.800 0 Z"/>
<g transform="translate(1854 937.2)" fill="url(#g)"><rect x="0" y=".3" width="1.900" height="8.600"/><path d="M1.600 4.700 L7.300 0 V2.900 C11.200 2.900 13.500 5.400 13.500 8.900 C13.500 11.500 11.700 13.500 8.800 14.200 C10.200 12.800 10.600 11.200 10.100 9.700 C9.600 7.900 8.700 6.800 7.300 6.800 V9.400 Z"/></g>
<g fill="url(#g)"><rect x="1877" y="939.3" width="12.300" height="2"/><rect x="1877" y="942.8" width="12.300" height="2"/><rect x="1877" y="946.3" width="12.300" height="2"/></g>
<g fill="#c2c3c4"><rect x="1899.200" y="941.7" width="3" height="2.900"/><rect x="1903.400" y="941.7" width="3" height="2.900"/><rect x="1907.600" y="941.7" width="3" height="2.900"/></g>
<path d="M1527 1070.1 V1081.1 L1537 1075.6 Z" fill="#9b9b9b"/>
<use href="#brush" x="1617.0" y="1068.3" width="11.200" height="11.400" fill="#8f9091"/>
<text x="1813.7" y="1080.9" font-size="15.300" font-weight="bold" fill="url(#g)" stroke="#9fa1a2" stroke-width=".45" font-family="Liberation Sans, sans-serif">?</text>
<path transform="translate(1834 1068.7)" fill="url(#g)" d="M13 0 V7.200 L10.700 4.900 L4.900 10.700 L7.200 13 H0 V5.800 L2.300 8.100 L8.100 2.300 L5.800 0 Z"/>
<g transform="translate(1854 1067.6)" fill="url(#g)"><rect x="0" y=".3" width="1.900" height="8.600"/><path d="M1.600 4.700 L7.300 0 V2.900 C11.200 2.900 13.500 5.400 13.500 8.900 C13.500 11.500 11.700 13.500 8.800 14.200 C10.200 12.800 10.600 11.200 10.100 9.700 C9.600 7.900 8.700 6.800 7.300 6.800 V9.400 Z"/></g>
<g fill="url(#g)"><rect x="1877" y="1069.7" width="12.300" height="2"/><rect x="1877" y="1073.2" width="12.300" height="2"/><rect x="1877" y="1076.7" width="12.300" height="2"/></g>
<g fill="#c2c3c4"><rect x="1899.200" y="1072.1" width="3" height="2.900"/><rect x="1903.400" y="1072.1" width="3" height="2.900"/><rect x="1907.600" y="1072.1" width="3" height="2.900"/></g>
<path d="M1527 1095.3 V1106.3 L1537 1100.8 Z" fill="#9b9b9b"/>
<use href="#brush" x="1589.7" y="1093.5" width="11.200" height="11.400" fill="#8f9091"/>
<text x="1813.7" y="1106.1" font-size="15.300" font-weight="bold" fill="url(#g)" stroke="#9fa1a2" stroke-width=".45" font-family="Liberation Sans, sans-serif">?</text>
<path transform="translate(1834 1093.9)" fill="url(#g)" d="M13 0 V7.200 L10.700 4.900 L4.900 10.700 L7.200 13 H0 V5.800 L2.300 8.100 L8.100 2.300 L5.800 0 Z"/>
<g transform="translate(1854 1092.8)" fill="url(#g)"><rect x="0" y=".3" width="1.900" height="8.600"/><path d="M1.600 4.700 L7.300 0 V2.900 C11.200 2.900 13.500 5.400 13.500 8.900 C13.500 11.500 11.700 13.500 8.800 14.200 C10.200 12.800 10.600 11.200 10.100 9.700 C9.600 7.900 8.700 6.800 7.300 6.800 V9.400 Z"/></g>
<g fill="url(#g)"><rect x="1877" y="1094.9" width="12.300" height="2"/><rect x="1877" y="1098.4" width="12.300" height="2"/><rect x="1877" y="1101.9" width="12.300" height="2"/></g>
<g fill="#c2c3c4"><rect x="1899.200" y="1097.3" width="3" height="2.900"/><rect x="1903.400" y="1097.3" width="3" height="2.900"/><rect x="1907.600" y="1097.3" width="3" height="2.900"/></g>
<path d="M1527 1120.5 V1131.5 L1537 1126.0 Z" fill="#9b9b9b"/>
<use href="#brush" x="1605.3" y="1118.7" width="11.200" height="11.400" fill="#8f9091"/>
<text x="1813.7" y="1131.3" font-size="15.300" font-weight="bold" fill="url(#g)" stroke="#9fa1a2" stroke-width=".45" font-family="Liberation Sans, sans-serif">?</text>
<path transform="translate(1834 1119.1)" fill="url(#g)" d="M13 0 V7.200 L10.700 4.900 L4.900 10.700 L7.200 13 H0 V5.800 L2.300 8.100 L8.100 2.300 L5.800 0 Z"/>
<g transform="translate(1854 1118.0)" fill="url(#g)"><rect x="0" y=".3" width="1.900" height="8.600"/><path d="M1.600 4.700 L7.300 0 V2.900 C11.200 2.900 13.500 5.400 13.500 8.900 C13.500 11.500 11.700 13.500 8.800 14.200 C10.200 12.800 10.600 11.200 10.100 9.700 C9.600 7.900 8.700 6.800 7.300 6.800 V9.400 Z"/></g>
<g fill="url(#g)"><rect x="1877" y="1120.1" width="12.300" height="2"/><rect x="1877" y="1123.6" width="12.300" height="2"/><rect x="1877" y="1127.1" width="12.300" height="2"/></g>
<g fill="#c2c3c4"><rect x="1899.200" y="1122.5" width="3" height="2.900"/><rect x="1903.400" y="1122.5" width="3" height="2.900"/><rect x="1907.600" y="1122.5" width="3" height="2.900"/></g>
<path d="M1527 1146.0 V1157.0 L1537 1151.5 Z" fill="#9b9b9b"/>
<use href="#brush" x="1617.0" y="1144.2" width="11.200" height="11.400" fill="#8f9091"/>
<text x="1813.7" y="1156.8" font-size="15.300" font-weight="bold" fill="url(#g)" stroke="#9fa1a2" stroke-width=".45" font-family="Liberation Sans, sans-serif">?</text>
<path transform="translate(1834 1144.6)" fill="url(#g)" d="M13 0 V7.200 L10.700 4.900 L4.900 10.700 L7.200 13 H0 V5.800 L2.300 8.100 L8.100 2.300 L5.800 0 Z"/>
<g transform="translate(1854 1143.5)" fill="url(#g)"><rect x="0" y=".3" width="1.900" height="8.600"/><path d="M1.600 4.700 L7.300 0 V2.900 C11.200 2.900 13.500 5.400 13.500 8.900 C13.500 11.500 11.700 13.500 8.800 14.200 C10.200 12.800 10.600 11.200 10.100 9.700 C9.600 7.900 8.700 6.800 7.300 6.800 V9.400 Z"/></g>
<g fill="url(#g)"><rect x="1877" y="1145.6" width="12.300" height="2"/><rect x="1877" y="1149.1" width="12.300" height="2"/><rect x="1877" y="1152.6" width="12.300" height="2"/></g>
<g fill="#c2c3c4"><rect x="1899.200" y="1148.0" width="3" height="2.900"/><rect x="1903.400" y="1148.0" width="3" height="2.900"/><rect x="1907.600" y="1148.0" width="3" height="2.900"/></g>
<path d="M1531.300 198.500 L1535 203.500 L1541.300 192.500" fill="none" stroke="#cf6c0a" stroke-width="2.600"/>
<g fill="#c9cacb"><rect x="1760" y="358.200" width="15" height="1.700"/><rect x="1760" y="364.400" width="15" height="1.700"/><rect x="1763.200" y="356.200" width="3.400" height="5.700"/><rect x="1768.800" y="362.400" width="3.400" height="5.700"/></g>
<use href="#brush" x="1792" y="351.300" width="18.800" height="19.200" fill="#a9aaab"/><use href="#dd" x="1817.500" y="361.800" width="5.800" height="3.200" fill="#777"/>
<path d="M1846.200 359.800 H1861.200 M1853.700 352.300 V367.300" stroke="#f4f4f4" stroke-width="2.400" fill="none"/><use href="#dd" x="1859" y="365.500" width="4.600" height="2.600" fill="#ddd"/>
<path d="M1885.500 359.800 H1899.500" stroke="#4e4e4e" stroke-width="2.400" fill="none"/>
<g fill="#b4b5b6"><path d="M1818.8000000000002 456.9 L1822.4 452.2 L1826.0 456.9 Z"/><path d="M1818.8000000000002 460.5 L1822.4 465.2 L1826.0 460.5 Z"/></g>
<g fill="#b4b5b6"><path d="M1890.7 976.9000000000001 L1894.3 972.2 L1897.8999999999999 976.9000000000001 Z"/><path d="M1890.7 980.5 L1894.3 985.2 L1897.8999999999999 980.5 Z"/></g>
<g fill="#b4b5b6"><path d="M1906.500 449.200 c1.800-.6 3.300 1 2.800 2.800 l-2.700 3.700 l.9.900 l-1.700 1.700 l-5-5 l1.700-1.700 l.9.900 z"/><path d="M1900.300 454.300 L1904.500 458.500 L1893.200 469.300 q-1.500 1.400-3.200 1 l-2 1.300 l-1-1 l1.300-2 q-.4-1.700 1-3.200 Z"/><rect x="1886" y="449.300" width="6" height="1.200"/><rect x="1887.800" y="452" width="4.200" height="1.200"/></g>
<g fill="none" stroke="#bdbdbd"><rect x="1484.4" y="1077.5" width="12.3" height="11.5" stroke-width="1.300"/><path d="M1487.0 1080.8 H1494.1000000000001 M1487.0 1083.25 H1494.1000000000001 M1487.0 1085.7 H1494.1000000000001" stroke-width="1.300"/></g>
<rect x="243.300" y="332.500" width="15.800" height="14.300" fill="#222" stroke="#d8d8d8" stroke-width="1"/>
<g fill="none" stroke="#d0d0d0"><rect x="245.3" y="334.3" width="11.8" height="10.7" stroke-width="1.300"/><path d="M247.9 337.6 H254.50000000000003 M247.9 339.65000000000003 H254.50000000000003 M247.9 341.7 H254.50000000000003" stroke-width="1.300"/></g>
</svg>

</body>
</html>
